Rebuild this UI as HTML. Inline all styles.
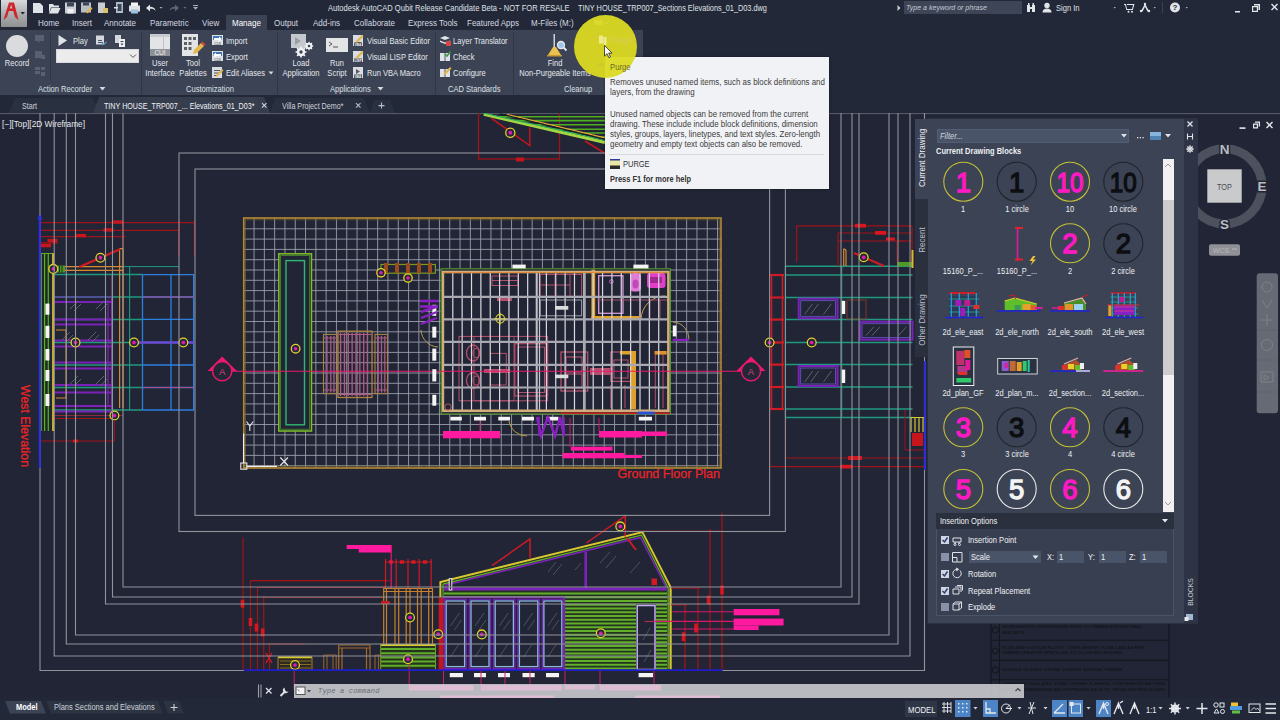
<!DOCTYPE html>
<html lang="en">
<head>
<meta charset="utf-8">
<title>Autodesk AutoCAD - TINY HOUSE_TRP007_Sections Elevations_01_D03.dwg</title>
<style>
*{box-sizing:border-box;margin:0;padding:0}
html,body{width:1280px;height:720px;overflow:hidden;background:#222535;font-family:"Liberation Sans",sans-serif;font-size:8.5px;color:#e4e7ec}
.abs{position:absolute}
#top{position:absolute;left:0;top:0;width:1280px;height:30px;background:#232838}
#ribbon{position:absolute;left:0;top:30px;width:1280px;height:67px;background:#232838}
#ribbon .pbg{position:absolute;left:0;top:0;width:643px;height:65px;background:#3b4354}
.t{position:absolute;white-space:nowrap;line-height:10px;height:10px;transform-origin:0 50%;transform:scaleX(.88)}
.sep{position:absolute;top:2px;width:1px;height:62px;background:#2f3646}
.mt{position:absolute;top:18px;white-space:nowrap;line-height:10px;color:#d5d9e0;font-size:8.7px;transform-origin:0 50%;transform:scaleX(.92)}
.rt{position:absolute;white-space:nowrap;line-height:10px;height:10px;color:#e6e9ee;font-size:8.6px;transform-origin:0 50%;transform:scaleX(.88)}
.pt{position:absolute;white-space:nowrap;line-height:10px;height:10px;color:#dde1e7;font-size:8.6px;top:53px;transform-origin:0 50%;transform:scaleX(.88)}
#ftabs{position:absolute;left:0;top:97px;width:1280px;height:16px;background:#232838}
#draw{position:absolute;left:0;top:113px;width:1280px;height:585px;background:#222535;overflow:hidden}
#status{position:absolute;left:0;top:698px;width:1280px;height:22px;background:#232838}
.c{transform-origin:50% 50%;transform:translateX(-50%) scaleX(.88);text-align:center}
.rt,.pt{margin-top:.6px}

</style>
</head>
<body>
<div id="draw">
<svg class="abs" style="left:0;top:0" width="1280" height="585" viewBox="0 113 1280 585" fill="none" shape-rendering="auto">
<path d="M0 113.6L1280 113.6" stroke="#5a5f6b" stroke-width="1" />
<rect x="478.5" y="112" width="81" height="47" stroke="#a01319" stroke-width="1.3" fill="none" />
<path d="M493.674 116.7L610 116.7" stroke="#4fae1e" stroke-width="1.6" />
<path d="M510.503 120.6L610 120.6" stroke="#4fae1e" stroke-width="1.6" />
<path d="M528.625 124.8L610 124.8" stroke="#4fae1e" stroke-width="1.6" />
<path d="M547.611 129.2L610 129.2" stroke="#4fae1e" stroke-width="1.6" />
<path d="M564.008 133L610 133" stroke="#4fae1e" stroke-width="1.6" />
<path d="M581.268 137L610 137" stroke="#4fae1e" stroke-width="1.6" />
<path d="M483.75 114.4L605 142.5" stroke="#a7d642" stroke-width="3" fill="none" />
<path d="M483.75 113.2L605 140.2" stroke="#2fae5a" stroke-width="1.2" fill="none" />
<path d="M507 114.3L605 137.8" stroke="#e8a33a" stroke-width="1.2" fill="none" />
<path d="M500 113.8L605 139.4" stroke="#161a22" stroke-width="1.2" fill="none" />
<path d="M491.5 118.3L529.8 145.6V127.6" stroke="#c4161c" stroke-width="1.5" fill="none" />
<path d="M585 141L606 154" stroke="#c4161c" stroke-width="1.5" fill="none" />
<rect x="516" y="157.5" width="8" height="4" fill="#c4161c"/>
<circle cx="510.3" cy="132.8" r="4.6" fill="#252a36" stroke="#e3d22e" stroke-width="1.3"/><circle cx="510.3" cy="132.8" r="1.932" fill="#e21bb0"/>
<path d="M254.05 218V468M264.35 218V468M274.65 218V468M284.95 218V468M295.25 218V468M305.55 218V468M315.85 218V468M326.15 218V468M336.45 218V468M346.75 218V468M357.05 218V468M367.35 218V468M377.65 218V468M387.95 218V468M398.25 218V468M408.55 218V468M418.85 218V468M429.15 218V468M439.45 218V468M449.75 218V468M460.05 218V468M470.35 218V468M480.65 218V468M490.95 218V468M501.25 218V468M511.55 218V468M521.85 218V468M532.15 218V468M542.45 218V468M552.75 218V468M563.05 218V468M573.35 218V468M583.65 218V468M593.95 218V468M604.25 218V468M614.55 218V468M624.85 218V468M635.15 218V468M645.45 218V468M655.75 218V468M666.05 218V468M676.35 218V468M686.65 218V468M696.95 218V468M707.25 218V468M717.55 218V468M243.75 228.80H721M243.75 239.10H721M243.75 249.40H721M243.75 259.70H721M243.75 270.00H721M243.75 280.30H721M243.75 290.60H721M243.75 300.90H721M243.75 311.20H721M243.75 321.50H721M243.75 331.80H721M243.75 342.10H721M243.75 352.40H721M243.75 362.70H721M243.75 373.00H721M243.75 383.30H721M243.75 393.60H721M243.75 403.90H721M243.75 414.20H721M243.75 424.50H721M243.75 434.80H721M243.75 445.10H721M243.75 455.40H721M243.75 465.70H721" stroke="#999eaa" stroke-width="0.9" fill="none" />
<rect x="243.75" y="218" width="477.25" height="250" stroke="#b48a32" stroke-width="1.6" fill="none" />
<rect x="245.5" y="219.8" width="473.7" height="246.4" stroke="#6d5c2c" stroke-width="0.8" fill="none" />
<rect x="278.8" y="253.8" width="32.7" height="177.2" stroke="#7fbf2a" stroke-width="1.5" fill="#222535" />
<rect x="280.6" y="255.6" width="29.1" height="173.6" stroke="#4c8f2a" stroke-width="0.8" fill="none" />
<rect x="286" y="260.6" width="18.5" height="164.2" stroke="#2fb873" stroke-width="1.4" fill="none" />
<circle cx="295.6" cy="348.7" r="4.3" fill="#252a36" stroke="#e3d22e" stroke-width="1.3"/><circle cx="295.6" cy="348.7" r="1.806" fill="#e21bb0"/>
<rect x="381" y="264.5" width="54.4" height="8.7" stroke="#7d9a1e" stroke-width="1.2" fill="#222535" />
<rect x="384" y="263" width="4" height="10" fill="#9a4a1c"/>
<rect x="395" y="263" width="4" height="10" fill="#9a4a1c"/>
<rect x="406" y="263" width="4" height="10" fill="#9a4a1c"/>
<rect x="417" y="263" width="4" height="10" fill="#9a4a1c"/>
<rect x="428" y="263" width="4" height="10" fill="#9a4a1c"/>
<circle cx="381" cy="272.8" r="4.2" fill="#252a36" stroke="#e3d22e" stroke-width="1.3"/><circle cx="381" cy="272.8" r="1.764" fill="#e21bb0"/>
<circle cx="408" cy="278" r="4.2" fill="#252a36" stroke="#e3d22e" stroke-width="1.3"/><circle cx="408" cy="278" r="1.764" fill="#e21bb0"/>
<rect x="323.5" y="334.4" width="13.5" height="59.3" stroke="#a88248" stroke-width="1.1" fill="none" />
<rect x="375" y="334.4" width="12.5" height="59.3" stroke="#a88248" stroke-width="1.1" fill="none" />
<rect x="338" y="331.2" width="34" height="66.3" stroke="#b08040" stroke-width="1.3" fill="none" />
<path d="M327 336V392.5M330.8 336V392.5M334 336V392.5M378.2 336V392.5M381.5 336V392.5M384.8 336V392.5" stroke="#a85a84" stroke-width="1.3" fill="none" />
<path d="M324 338H337M324 390H337M375 338H387.5M375 390H387.5" stroke="#a85a84" stroke-width="1.2" fill="none" />
<path d="M340.6 333V396M344.45 333V396M348.3 333V396M352.15 333V396M356 333V396M359.85 333V396M363.7 333V396M367.55 333V396" stroke="#b05a86" stroke-width="1.3" fill="none" />
<path d="M339 334.500H371M339 394.500H371" stroke="#b05a86" stroke-width="1.2" fill="none" />
<rect x="440.7" y="268.4" width="229.9" height="145.8" fill="#222535"/>
<rect x="459" y="336.4" width="88.6" height="64.4" stroke="#b4506e" stroke-width="1" fill="none" />
<rect x="514.8" y="343.7" width="32.8" height="52.3" stroke="#b4506e" stroke-width="1.2" fill="none" />
<rect x="518" y="347" width="26.5" height="45.5" stroke="#b4506e" stroke-width="1" fill="none" />
<rect x="490.5" y="353.4" width="15.8" height="31.6" stroke="#b4506e" stroke-width="1" fill="none" />
<rect x="474" y="336.4" width="40" height="64.4" stroke="#b4506e" stroke-width="0.8" fill="none" />
<ellipse cx="473" cy="353" rx="6.5" ry="8" stroke="#b4506e" stroke-width="1.3" fill="none"/><ellipse cx="476" cy="353" rx="3" ry="4.5" stroke="#b4506e" stroke-width="1" fill="none"/>
<ellipse cx="473" cy="380.5" rx="6.5" ry="8" stroke="#b4506e" stroke-width="1.3" fill="none"/><ellipse cx="476" cy="380.5" rx="3" ry="4.5" stroke="#b4506e" stroke-width="1" fill="none"/>
<rect x="540.3" y="274.4" width="41.3" height="21.9" stroke="#b4506e" stroke-width="1" fill="none" />
<path d="M540.3 285L570 285" stroke="#b4506e" stroke-width="1" />
<path d="M555 274.4L555 296.3" stroke="#b4506e" stroke-width="1" />
<path d="M570 274.4L570 296.3" stroke="#b4506e" stroke-width="1" />
<rect x="540.3" y="300" width="41.3" height="15.8" stroke="#9aa0aa" stroke-width="1" fill="none" />
<rect x="492" y="276" width="26" height="9.5" stroke="#b4506e" stroke-width="1" fill="none" />
<path d="M492 280.5L518 280.5" stroke="#b4506e" stroke-width="1" />
<rect x="497" y="297" width="15" height="4" fill="#b4506e"/>
<rect x="561" y="352" width="26.7" height="39" stroke="#b4506e" stroke-width="1.3" fill="none" />
<rect x="566" y="357" width="16" height="15" stroke="#b4506e" stroke-width="1.2" fill="none" />
<rect x="566" y="374" width="16" height="14" stroke="#b4506e" stroke-width="1.2" fill="none" />
<rect x="610.8" y="352" width="20.7" height="29.4" stroke="#b4506e" stroke-width="1.2" fill="none" />
<rect x="614" y="360" width="14" height="18" stroke="#b4506e" stroke-width="1" fill="none" />
<rect x="590" y="368" width="22" height="7" fill="#b4506e"/>
<rect x="484" y="369" width="26" height="4" fill="#b4506e"/>
<path d="M655.3 354.6V408M663 354.6V408M610.8 385V408M625 385V408" stroke="#b4506e" stroke-width="1" fill="none" />
<rect x="591.4" y="269.6" width="3.8" height="50" fill="#e0a12a"/>
<rect x="591.4" y="316" width="47.6" height="3.6" fill="#e0a12a"/>
<rect x="598.7" y="275.7" width="24.3" height="37.6" stroke="#d79ad6" stroke-width="1.3" fill="none" />
<circle cx="611.4" cy="281.5" r="1.8" stroke="#d060d0" stroke-width="1" fill="none"/>
<rect x="630" y="273" width="11" height="18.500" rx="4" fill="#e27ad8"/><ellipse cx="635.500" cy="284" rx="3" ry="4.500" fill="#c04ab8"/>
<rect x="647" y="273" width="18.500" height="15" rx="3" fill="#e040c8"/><path d="M650 277h12v6h-12z" fill="#a02a90"/>
<path d="M641 319A24 24 0 0 1 665 296" stroke="#c9a050" stroke-width="1" fill="none" />
<path d="M597 300H668M640 296V319M650 300V319M660 300V319" stroke="#a0506a" stroke-width="1" fill="none" />
<rect x="630" y="352" width="6" height="57" fill="#e0a12a"/>
<rect x="620" y="351" width="16" height="3.5" fill="#e0a12a"/>
<rect x="654.5" y="351" width="12.2" height="3.6" fill="#e0902a"/>
<path d="M452.80 273V410M462.16 273V410M471.52 273V410M480.88 273V410M490.24 273V410M499.60 273V410M508.96 273V410M518.32 273V410M527.68 273V410M537.04 273V410M546.40 273V410M555.76 273V410M565.12 273V410M574.48 273V410M583.84 273V410M593.20 273V410M602.56 273V410M611.92 273V410M621.28 273V410M630.64 273V410M640.00 273V410M649.36 273V410M658.72 273V410" stroke="#d9d9de" stroke-width="1.2" fill="none" />
<path d="M536.3 273V410M539.5 273V410M585 273V410" stroke="#c8c8ce" stroke-width="1.2" fill="none" />
<path d="M444 296.8H668M444 319.4H668M444 341.8H668M444 364.9H668M444 387.5H668" stroke="#a9a9b2" stroke-width="2.2" fill="none" />
<rect x="442.9" y="272" width="225.5" height="138.8" stroke="#d2ae7c" stroke-width="2.6" fill="none" />
<rect x="441.1" y="268.8" width="229.3" height="145.2" stroke="#58a82a" stroke-width="1" fill="none" />
<path d="M561 413.2L670 413.2" stroke="#d0201c" stroke-width="1.6" />
<rect x="637.5" y="411.6" width="17.1" height="2.8" fill="#2a50d8"/>
<path d="M443 272.5L668 272.5" stroke="#e08a3a" stroke-width="1" />
<path d="M222 371.3L751 371.3" stroke="#e8186c" stroke-width="1.1" />
<rect x="512.4" y="264.6" width="13.3" height="3.8" fill="#f4f4f4"/>
<rect x="633.4" y="264.6" width="15.1" height="3.8" fill="#f4f4f4"/>
<rect x="555" y="306" width="13.3" height="3.7" fill="#dcdcdc"/>
<rect x="555" y="374.6" width="13.3" height="3.6" fill="#dcdcdc"/>
<rect x="450.4" y="416.8" width="11.4" height="3.7" fill="#f4f4f4"/>
<rect x="474" y="416.8" width="12" height="3.7" fill="#f4f4f4"/>
<rect x="498.3" y="416.8" width="11.7" height="3.7" fill="#f4f4f4"/>
<rect x="522" y="416.8" width="12" height="3.7" fill="#f4f4f4"/>
<rect x="546.4" y="416.8" width="12.1" height="3.7" fill="#f4f4f4"/>
<rect x="638.8" y="416.8" width="13.2" height="3.7" fill="#f4f4f4"/>
<rect x="432.3" y="304.8" width="4" height="11" fill="#f4f4f4"/>
<rect x="432.3" y="326.7" width="4" height="10.9" fill="#f4f4f4"/>
<rect x="432.3" y="348.6" width="4" height="12.1" fill="#f4f4f4"/>
<rect x="432.3" y="369.2" width="4" height="12.2" fill="#f4f4f4"/>
<rect x="432.3" y="394.8" width="4" height="10.9" fill="#f4f4f4"/>
<rect x="672.8" y="325.5" width="3.6" height="10.9" fill="#f4f4f4"/>
<path d="M420 301H438M420 306.5H438M421 312L437 306.5M421 318L437 312M421 324L437 318" stroke="#8a1fc4" stroke-width="2.4" fill="none" />
<path d="M537 417L541 436L548 417L555 436L560 417L564 436" stroke="#8a1fc4" stroke-width="2.4" fill="none" />
<path d="M539 417V436M564 417V436" stroke="#8a1fc4" stroke-width="1.6" fill="none" />
<path d="M421 330A18 18 0 0 0 438 347" stroke="#b59a5a" stroke-width="1" fill="none" />
<path d="M509 421A18 18 0 0 0 527 436" stroke="#b5a030" stroke-width="1" fill="none" />
<path d="M673 322A17 17 0 0 1 689 339" stroke="#b59a5a" stroke-width="1" fill="none" />
<rect x="672.8" y="338.8" width="16.2" height="2.2" fill="#8a1fc4"/>
<circle cx="500.200" cy="318.700" r="4.300" stroke="#d8cf40" stroke-width="1.100" fill="none"/><path d="M494 318.700h12.400M500.200 312.500v12.400" stroke="#d8cf40" stroke-width=".8"/>
<circle cx="448" cy="407" r="3.200" stroke="#b05a5a" stroke-width="1" fill="none"/>
<rect x="443" y="431" width="57" height="7.3" fill="#ff1aa0"/>
<rect x="599" y="431" width="43" height="6.5" fill="#ff1aa0"/>
<rect x="642" y="431.5" width="25" height="4.5" fill="#ff1aa0"/>
<rect x="570.8" y="446.7" width="41.7" height="3.9" fill="#ff1aa0"/>
<rect x="562.5" y="453" width="62.5" height="5.3" fill="#ff1aa0"/>
<rect x="625" y="455" width="17" height="3" fill="#ff1aa0"/>
<path d="M570 418V447M599 418V431M480 421V431" stroke="#d8186c" stroke-width="1" fill="none" />
<path d="M207.6 371L222.2 356.500L236.79999999999998 371Z" fill="#ef1a70"/><circle cx="222.2" cy="371.200" r="9.600" fill="#232735" stroke="#e8186c" stroke-width="1.500"/><text x="222.2" y="374.800" font-size="9.500" text-anchor="middle" fill="#d8407c" font-family="Liberation Sans, sans-serif">A</text>
<path d="M736.4 371L751 356.500L765.6 371Z" fill="#ef1a70"/><circle cx="751" cy="371.200" r="9.600" fill="#232735" stroke="#e8186c" stroke-width="1.500"/><text x="751" y="374.800" font-size="9.500" text-anchor="middle" fill="#d8407c" font-family="Liberation Sans, sans-serif">A</text>
<path d="M243.6 463V433.4M247 466.4H277" stroke="#f0f0f0" stroke-width="1.2" fill="none" />
<rect x="240.8" y="463" width="6" height="6.2" stroke="#e8e8e8" stroke-width="1.1" fill="none" />
<path d="M246.5 421.5L249.8 426L253.2 421.5M249.8 426V431" stroke="#e8e8e8" stroke-width="1.1" fill="none" />
<path d="M280.3 457.5L288 465.5M288 457.5L280.3 465.5" stroke="#e8e8e8" stroke-width="1.1" fill="none" />
<text x="617.500" y="478.300" font-size="13.600" fill="#ee2428" stroke="#ee2428" stroke-width=".25" font-family="Liberation Sans, sans-serif" textLength="102.500" lengthAdjust="spacingAndGlyphs">Ground Floor Plan</text>
<text transform="translate(21.200 385) rotate(90)" font-size="13.600" fill="#ee2428" stroke="#ee2428" stroke-width=".25" font-family="Liberation Sans, sans-serif" textLength="82" lengthAdjust="spacingAndGlyphs">West Elevation</text>
<path d="M40 222.6H194.5M40 230.3H179M40 236.6H125.6M40 243H58" stroke="#a01319" stroke-width="1.3" fill="none" />
<path d="M179 220V256M194.5 220V256M122.8 220V249" stroke="#a01319" stroke-width="1.3" fill="none" />
<rect x="113" y="220.4" width="10" height="3.4" fill="#c8161e"/>
<rect x="103.5" y="228.2" width="10" height="3.4" fill="#c8161e"/>
<rect x="76" y="233.9" width="10" height="3.4" fill="#c8161e"/>
<rect x="47.5" y="238.9" width="10" height="3.4" fill="#c8161e"/>
<rect x="41" y="243.9" width="10" height="3.4" fill="#c8161e"/>
<path d="M54 274.6L142.5 274.6" stroke="#1f9a80" stroke-width="1.5" />
<path d="M54 297L142.5 297" stroke="#1f9a80" stroke-width="1.5" />
<path d="M54 319.4L142.5 319.4" stroke="#1f9a80" stroke-width="1.5" />
<path d="M54 342.5L142.5 342.5" stroke="#1f9a80" stroke-width="1.5" />
<path d="M54 365L142.5 365" stroke="#1f9a80" stroke-width="1.5" />
<path d="M54 387.5L142.5 387.5" stroke="#1f9a80" stroke-width="1.5" />
<path d="M54 410L142.5 410" stroke="#1f9a80" stroke-width="1.5" />
<path d="M123 266.6L179 266.6" stroke="#1f9a80" stroke-width="1" />
<path d="M129.6 266.6V410" stroke="#1f9a80" stroke-width="1.1" fill="none" />
<path d="M142.5 274.6H194M142.5 297H194M142.5 319.4H194M142.5 342.5H194M142.5 365H194M142.5 387.5H194M142.5 410H194" stroke="#2b7fe0" stroke-width="1.4" fill="none" />
<path d="M142.5 274.6V410M171 274.6V410M193.6 274.6V410" stroke="#2b7fe0" stroke-width="1.3" fill="none" />
<path d="M142.5 297L194 297" stroke="#b04a8a" stroke-width="1.2" />
<path d="M142.5 387.5L194 387.5" stroke="#b04a8a" stroke-width="1.2" />
<path d="M131 342.5L194 342.5" stroke="#6a4ad0" stroke-width="2.4" />
<path d="M55 302L112 302" stroke="#7a22b8" stroke-width="2" />
<path d="M55 319.4L112 319.4" stroke="#7a22b8" stroke-width="2" />
<path d="M55 324.5L112 324.5" stroke="#7a22b8" stroke-width="2" />
<path d="M55 340.5L112 340.5" stroke="#7a22b8" stroke-width="2" />
<path d="M55 346.5L112 346.5" stroke="#7a22b8" stroke-width="2" />
<path d="M55 362.5L112 362.5" stroke="#7a22b8" stroke-width="2" />
<path d="M55 368.5L112 368.5" stroke="#7a22b8" stroke-width="2" />
<path d="M55 385L112 385" stroke="#7a22b8" stroke-width="2" />
<path d="M55 392.5L112 392.5" stroke="#7a22b8" stroke-width="2" />
<path d="M55 406L112 406" stroke="#7a22b8" stroke-width="2" />
<path d="M55 411.5L112 411.5" stroke="#7a22b8" stroke-width="2" />
<path d="M111.7 297V410M108 300V406" stroke="#7a22b8" stroke-width="1.3" fill="none" />
<path d="M54.7 297H112" stroke="#7a22b8" stroke-width="1.2" fill="none" />
<path d="M112 274.6L112 410" stroke="#b04a8a" stroke-width="1" />
<path d="M70 309L78 301M74 311L81 304M96 309L104 301M100 311L107 304M88 340L96 332M92 342L99 335M70 384L78 376M74 386L81 379M96 384L104 376M100 386L107 379M62 340L70 332M66 342L73 335" stroke="#5b6170" stroke-width="1" fill="none" />
<path d="M119.6 248.6V408M123 248.6V408M119.6 248.6H123" stroke="#d8892e" stroke-width="1.2" fill="none" />
<path d="M65 266.6H123M65 270.4H123" stroke="#d8892e" stroke-width="1.2" fill="none" />
<path d="M56 330H66V398H56" stroke="#d8892e" stroke-width="1" fill="none" />
<path d="M79.2 266.9L120 249.3" stroke="#d01a24" stroke-width="2.2" />
<rect x="40.5" y="253.5" width="10" height="177.5" fill="#1d2a24"/>
<path d="M41.2 253.5V431M44.6 253.5V431M48.3 253.5V431M41 253.5H54" stroke="#5fae28" stroke-width="1.2" fill="none" />
<path d="M53.2 253.5L53.2 431" stroke="#d8b82e" stroke-width="2.2" />
<rect x="57.5" y="265.5" width="7.5" height="7" fill="#4f9a24"/>
<path d="M59.5 265.5V272.5M62 265.5V272.5" stroke="#1d2a24" stroke-width="1" fill="none" />
<path d="M39.8 215.5L39.8 452" stroke="#2a2fd8" stroke-width="2" />
<path d="M38 219L39.8 214L41.6 219Z" stroke="#2a2fd8" stroke-width="1" fill="#2a2fd8" />
<rect x="45.4" y="303.6" width="4" height="11.1" fill="#f4f4f4"/>
<rect x="45.4" y="325.8" width="4" height="12.2" fill="#f4f4f4"/>
<rect x="45.4" y="349" width="4" height="11.5" fill="#f4f4f4"/>
<rect x="45.4" y="370" width="4" height="11" fill="#f4f4f4"/>
<rect x="45.4" y="394" width="4" height="12" fill="#f4f4f4"/>
<path d="M54 415.5H123" stroke="#8a2a3a" stroke-width="1" fill="none" />
<path d="M54 418.5H112" stroke="#a01319" stroke-width="1" fill="none" />
<circle cx="53.3" cy="268.9" r="4.4" fill="#252a36" stroke="#e3d22e" stroke-width="1.3"/><circle cx="53.3" cy="268.9" r="1.848" fill="#e21bb0"/>
<circle cx="100.4" cy="257.7" r="4.4" fill="#252a36" stroke="#e3d22e" stroke-width="1.3"/><circle cx="100.4" cy="257.7" r="1.848" fill="#e21bb0"/>
<circle cx="75.5" cy="342.5" r="4.4" fill="#252a36" stroke="#e3d22e" stroke-width="1.3"/><circle cx="75.5" cy="342.5" r="1.848" fill="#e21bb0"/>
<circle cx="134" cy="342.5" r="4.4" fill="#252a36" stroke="#e3d22e" stroke-width="1.3"/><circle cx="134" cy="342.5" r="1.848" fill="#e21bb0"/>
<circle cx="183.3" cy="342.5" r="4.4" fill="#252a36" stroke="#e3d22e" stroke-width="1.3"/><circle cx="183.3" cy="342.5" r="1.848" fill="#e21bb0"/>
<circle cx="114.4" cy="415.5" r="4.4" fill="#252a36" stroke="#e3d22e" stroke-width="1.3"/><circle cx="114.4" cy="415.5" r="1.848" fill="#e21bb0"/>
<path d="M40 441H114.4M114.4 420V441" stroke="#a01319" stroke-width="1.1" fill="none" />
<rect x="73" y="439.5" width="5" height="3" fill="#d8161e"/>
<path d="M785.4 266.2L912.5 266.2" stroke="#1f9a80" stroke-width="1.5" />
<path d="M785.4 275L912.5 275" stroke="#1f9a80" stroke-width="1.5" />
<path d="M785.4 297.5L912.5 297.5" stroke="#1f9a80" stroke-width="1.5" />
<path d="M785.4 319.6L912.5 319.6" stroke="#1f9a80" stroke-width="1.5" />
<path d="M785.4 342.5L912.5 342.5" stroke="#1f9a80" stroke-width="1.5" />
<path d="M785.4 364.6L912.5 364.6" stroke="#1f9a80" stroke-width="1.5" />
<path d="M785.4 387L912.5 387" stroke="#1f9a80" stroke-width="1.5" />
<path d="M785.4 409L912.5 409" stroke="#1f9a80" stroke-width="1.5" />
<path d="M785.4 417.5L912.5 417.5" stroke="#1f9a80" stroke-width="1.5" />
<path d="M785.4 266V417.5M841.7 266V417.5" stroke="#1f9a80" stroke-width="1.1" fill="none" />
<path d="M771.5 275V409M782.5 275V409" stroke="#d01a24" stroke-width="1.6" fill="none" />
<path d="M769.6 275L784 275" stroke="#d01a24" stroke-width="2.2" />
<path d="M769.6 297.5L784 297.5" stroke="#d01a24" stroke-width="2.2" />
<path d="M769.6 319.6L784 319.6" stroke="#d01a24" stroke-width="2.2" />
<path d="M769.6 342.5L784 342.5" stroke="#d01a24" stroke-width="2.2" />
<path d="M769.6 364.6L784 364.6" stroke="#d01a24" stroke-width="2.2" />
<path d="M769.6 387L784 387" stroke="#d01a24" stroke-width="2.2" />
<path d="M769.6 409L784 409" stroke="#d01a24" stroke-width="2.2" />
<rect x="798.7" y="298.7" width="38.8" height="19.6" stroke="#7a22b8" stroke-width="2" fill="none" />
<rect x="800.7" y="300.7" width="34.8" height="15.6" stroke="#6a5ad0" stroke-width="0.8" fill="none" />
<path d="M804.7 314.3L812.7 303.7M810.7 314.3L818.7 303.7M823.5 314.3L831.5 303.7" stroke="#5b6170" stroke-width="1" fill="none" />
<rect x="860" y="321.7" width="52.5" height="17.9" stroke="#7a22b8" stroke-width="2" fill="none" />
<rect x="862" y="323.7" width="48.5" height="13.9" stroke="#6a5ad0" stroke-width="0.8" fill="none" />
<path d="M866 335.6L874 326.7M872 335.6L880 326.7M898.5 335.6L906.5 326.7" stroke="#5b6170" stroke-width="1" fill="none" />
<rect x="798.7" y="366" width="38.8" height="20" stroke="#7a22b8" stroke-width="2" fill="none" />
<rect x="800.7" y="368" width="34.8" height="16" stroke="#6a5ad0" stroke-width="0.8" fill="none" />
<path d="M804.7 382L812.7 371M810.7 382L818.7 371M823.5 382L831.5 371" stroke="#5b6170" stroke-width="1" fill="none" />
<rect x="841.7" y="300.8" width="3.5" height="13.2" fill="#f4f4f4"/>
<rect x="841.7" y="369.6" width="3.5" height="13.4" fill="#f4f4f4"/>
<rect x="847" y="300" width="19" height="19" stroke="#7a3a2a" stroke-width="1" fill="none" />
<path d="M796.7 225.8H912M838 233H912M838 241H905M796.7 225.8V262M838 233V266M912 225.8V262" stroke="#a01319" stroke-width="1.2" fill="none" />
<rect x="855" y="223.8" width="11" height="3.8" fill="#d8161e"/>
<rect x="875" y="231" width="11" height="3.8" fill="#d8161e"/>
<rect x="886" y="237.5" width="9" height="3" fill="#d8161e"/>
<path d="M897 241H912M897 241V262" stroke="#a01319" stroke-width="1" fill="none" />
<path d="M843.7 248.7V266M846 250V266" stroke="#d8892e" stroke-width="1.2" fill="none" />
<path d="M843.7 248.7L846 250" stroke="#d8892e" stroke-width="1.2" />
<path d="M854 253L884 266" stroke="#d01a24" stroke-width="2" />
<rect x="897" y="262" width="15" height="4.5" fill="#4f9a24"/>
<path d="M912.5 250L912.5 268" stroke="#d8b82e" stroke-width="2" />
<path d="M785.4 458H925M769.6 466.7H925M785.4 417.5V458M769.6 409V466.7" stroke="#a01319" stroke-width="1.2" fill="none" />
<rect x="848" y="456" width="14" height="4" fill="#d8161e"/>
<rect x="840" y="464.8" width="12" height="3.7" fill="#d8161e"/>
<path d="M925 361L925 470" stroke="#2a2fd8" stroke-width="2" />
<path d="M911 417.5V432M915 417.5V432M919 417.5V432M923 417.5V432M910 417.5H924" stroke="#d8c82e" stroke-width="1.2" fill="none" />
<rect x="912" y="433" width="11" height="13" fill="#c4161c"/>
<path d="M905 410V450M905 450H925" stroke="#a01319" stroke-width="1" fill="none" />
<circle cx="769.6" cy="342.5" r="4.4" fill="#252a36" stroke="#e3d22e" stroke-width="1.3"/><circle cx="769.6" cy="342.5" r="1.848" fill="#e21bb0"/>
<circle cx="811.7" cy="342.5" r="4.4" fill="#252a36" stroke="#e3d22e" stroke-width="1.3"/><circle cx="811.7" cy="342.5" r="1.848" fill="#e21bb0"/>
<circle cx="863.7" cy="257.3" r="4.4" fill="#252a36" stroke="#e3d22e" stroke-width="1.3"/><circle cx="863.7" cy="257.3" r="1.848" fill="#e21bb0"/>
<path d="M243 537.5V670.3M250.5 580.7V670.3M257.5 587.5V670.3M263.7 596V670.3M269.5 644V670.3" stroke="#a01319" stroke-width="1.2" fill="none" />
<path d="M250.5 580.7H390M257.5 587.5H385M263.7 597.5H382.5M269.5 644H305" stroke="#a01319" stroke-width="1.2" fill="none" />
<rect x="240.7" y="599.7" width="3.6" height="8" fill="#d8161e"/>
<rect x="248.7" y="618" width="3.6" height="8" fill="#d8161e"/>
<rect x="254.7" y="623.5" width="3.6" height="8" fill="#d8161e"/>
<rect x="260.9" y="628.5" width="3.6" height="8" fill="#d8161e"/>
<path d="M266 653L272 663M272 653L266 663" stroke="#d01a24" stroke-width="1.4" fill="none" />
<rect x="278" y="657" width="34" height="13" fill="#2a2a22"/>
<path d="M280 661H311M280 664.5H311M280 668H311" stroke="#8a6a22" stroke-width="1.1" fill="none" />
<path d="M278 657.3L312 657.3" stroke="#d8c82e" stroke-width="2" />
<path d="M278 657V670M312 657V670" stroke="#b07a2a" stroke-width="1" fill="none" />
<path d="M323.7 655H336.2M323.7 655V670M336.2 655V670M327 655V670M333 655V670" stroke="#8a5a28" stroke-width="1.2" fill="none" />
<path d="M338.7 645H370M338.7 645V670M370 645V670M342 648V670M366.5 648V670M338.7 648H370" stroke="#a06a2a" stroke-width="1.2" fill="none" />
<path d="M375 655H386M375 655V670M386 655V670M378.5 655V670" stroke="#8a5a28" stroke-width="1.2" fill="none" />
<rect x="380.7" y="644.2" width="54.8" height="25.8" fill="#26331e"/>
<path d="M381 649H435M381 653.2H435M381 657.4H435M381 661.6H435M381 665.8H435" stroke="#5fae28" stroke-width="2" fill="none" />
<path d="M380.7 645L435.5 645" stroke="#d8c82e" stroke-width="2.2" />
<path d="M380.7 644V670M435.5 644V670" stroke="#7a9a2a" stroke-width="1" fill="none" />
<path d="M383.7 589V644M386.5 589V644M395 589V644M398.7 589V644M406.2 589V644M410 589V644M417.5 589V644M421.2 589V644M428.7 589V644M432.5 589V644" stroke="#c8802c" stroke-width="1.2" fill="none" />
<path d="M383 588.5H433M383 591.5H433" stroke="#c8802c" stroke-width="1.1" fill="none" />
<path d="M385.5 562H431.2M385.5 559V588M396.2 559V588M408 559V588M419.2 559V588M431.2 559V588" stroke="#d01a24" stroke-width="1.2" fill="none" />
<rect x="389" y="560.3" width="4" height="3.4" fill="#e0161e"/>
<rect x="400" y="560.3" width="4" height="3.4" fill="#e0161e"/>
<rect x="411.5" y="560.3" width="4" height="3.4" fill="#e0161e"/>
<rect x="423" y="560.3" width="4" height="3.4" fill="#e0161e"/>
<rect x="381" y="601" width="9" height="3" fill="#c8161e"/>
<rect x="346.7" y="545" width="44.5" height="4" fill="#ff1aa0"/>
<rect x="358.7" y="548.5" width="32.5" height="4" fill="#ff1aa0"/>
<path d="M391.2 545L391.2 588" stroke="#e8186c" stroke-width="1.2" />
<rect x="438.7" y="597.5" width="5" height="72.8" fill="#c4161c"/>
<rect x="443.7" y="590" width="224.3" height="80.3" fill="#243320"/>
<path d="M444 593.50H667M444 597.25H667M444 601.00H667M444 604.75H667M444 608.50H667M444 612.25H667M444 616.00H667M444 619.75H667M444 623.50H667M444 627.25H667M444 631.00H667M444 634.75H667M444 638.50H667M444 642.25H667M444 646.00H667M444 649.75H667M444 653.50H667M444 657.25H667M444 661.00H667M444 664.75H667M444 668.50H667" stroke="#62b02a" stroke-width="1.9" fill="none" />
<rect x="444" y="597" width="120.5" height="73.3" fill="#222535"/>
<rect x="444.3" y="597.3" width="120" height="72.4" stroke="#7a22b8" stroke-width="1.6" fill="none" />
<rect x="444.6" y="599.2" width="21.6" height="69.4" stroke="#7a22b8" stroke-width="1.2" fill="none" />
<rect x="446.2" y="601" width="18.4" height="65.6" stroke="#8fb8e8" stroke-width="1.3" fill="none" />
<path d="M450.4 626L459.4 613M454.4 630L461.4 620M450.4 657L458.4 645" stroke="#4b5262" stroke-width="1" fill="none" />
<rect x="469.4" y="599.2" width="21.2" height="69.4" stroke="#7a22b8" stroke-width="1.2" fill="none" />
<rect x="471" y="601" width="18" height="65.6" stroke="#8fb8e8" stroke-width="1.3" fill="none" />
<path d="M475.0 626L484.0 613M479.0 630L486.0 620M475.0 657L483.0 645" stroke="#4b5262" stroke-width="1" fill="none" />
<rect x="493.6" y="599.2" width="21.4" height="69.4" stroke="#7a22b8" stroke-width="1.2" fill="none" />
<rect x="495.2" y="601" width="18.2" height="65.6" stroke="#8fb8e8" stroke-width="1.3" fill="none" />
<path d="M499.29999999999995 626L508.29999999999995 613M503.29999999999995 630L510.29999999999995 620M499.29999999999995 657L507.29999999999995 645" stroke="#4b5262" stroke-width="1" fill="none" />
<rect x="517.8" y="599.2" width="21.6" height="69.4" stroke="#7a22b8" stroke-width="1.2" fill="none" />
<rect x="519.4" y="601" width="18.4" height="65.6" stroke="#8fb8e8" stroke-width="1.3" fill="none" />
<path d="M523.5999999999999 626L532.5999999999999 613M527.5999999999999 630L534.5999999999999 620M523.5999999999999 657L531.5999999999999 645" stroke="#4b5262" stroke-width="1" fill="none" />
<rect x="542.3" y="599.2" width="21.1" height="69.4" stroke="#7a22b8" stroke-width="1.2" fill="none" />
<rect x="543.9" y="601" width="17.9" height="65.6" stroke="#8fb8e8" stroke-width="1.3" fill="none" />
<path d="M547.8499999999999 626L556.8499999999999 613M551.8499999999999 630L558.8499999999999 620M547.8499999999999 657L555.8499999999999 645" stroke="#4b5262" stroke-width="1" fill="none" />
<rect x="636" y="604" width="20" height="66.3" fill="#222535"/>
<rect x="637.2" y="605.5" width="17.8" height="64" stroke="#c4aef4" stroke-width="1.5" fill="none" />
<path d="M643 640L650 628M644 662L651 650" stroke="#4b5262" stroke-width="1" fill="none" />
<path d="M644.7 621.4L660 621.4" stroke="#c8285a" stroke-width="1" />
<path d="M444 588.5L444 583.5L641.5 535L668 588.5Z" stroke="none" stroke-width="0" fill="#222535" />
<path d="M446 587L446 585L640.5 537.5L666 587" stroke="#7a22b8" stroke-width="1.6" fill="none" />
<path d="M444 588.9L667 588.9" stroke="#7a22b8" stroke-width="3" />
<path d="M585.7 552V588" stroke="#7a22b8" stroke-width="2.6" fill="none" />
<path d="M548 572L556 562M553 575L562 564M600 563L610 552M606 568L616 556M630 573L640 562M575 570L581 563" stroke="#4b5262" stroke-width="1" fill="none" />
<path d="M440.5 597V582.2L642.3 532.2L670.6 587.5V669.5" stroke="#d8c830" stroke-width="2.2" fill="none" />
<path d="M443 597V584L641.6 535L668.2 588V669.5" stroke="#5fae28" stroke-width="1.3" fill="none" />
<path d="M441.8 597V583.2L642 533.7L669.4 588" stroke="#30341c" stroke-width="0.7" fill="none" />
<rect x="449.2" y="578.7" width="2.6" height="11.3" fill="#222535"/>
<rect x="449.2" y="578.7" width="2.6" height="11.3" stroke="#f0e8e8" stroke-width="1" fill="none" />
<path d="M492 565.7L530 539V558" stroke="#d01a24" stroke-width="1.5" fill="none" />
<path d="M586.4 543L625.3 516V536.5" stroke="#d01a24" stroke-width="1.5" fill="none" />
<path d="M625 531.4H722.5" stroke="#d01a24" stroke-width="1.1" fill="none" />
<rect x="651.5" y="578.5" width="5.5" height="6.5" fill="#d01a24"/>
<path d="M627 538L636 550" stroke="#d01a24" stroke-width="2" fill="none" />
<path d="M722 512.5V670.3M710 529V670.3M698 588V670.3M685 605V670.3" stroke="#a01319" stroke-width="1.3" fill="none" />
<path d="M671 588.3H700M671 605H687" stroke="#a01319" stroke-width="1.1" fill="none" />
<rect x="720.2" y="585.5" width="3.6" height="9" fill="#d8161e"/>
<rect x="706.8" y="595.5" width="3.6" height="9" fill="#d8161e"/>
<rect x="694.2" y="623.5" width="3.6" height="9" fill="#d8161e"/>
<rect x="681.8" y="632.2" width="3.6" height="9" fill="#d8161e"/>
<path d="M672.5 611.7H733.6M655 621.4H733.6M672.5 629H733.6" stroke="#d8186c" stroke-width="1.1" fill="none" />
<rect x="733.6" y="609" width="45.8" height="6.3" fill="#ff1aa0"/>
<rect x="733.6" y="618.6" width="50" height="6.9" fill="#ff1aa0"/>
<rect x="733.6" y="625.5" width="25" height="4.5" fill="#ff1aa0"/>
<path d="M243.7 670.3L722.5 670.3" stroke="#1e1ecb" stroke-width="1.5" />
<rect x="449.8" y="673" width="13.1" height="4.2" fill="#f4f4f4"/>
<rect x="474" y="673" width="12" height="4.2" fill="#f4f4f4"/>
<rect x="498" y="673" width="12" height="4.2" fill="#f4f4f4"/>
<rect x="522.5" y="673" width="12.2" height="4.2" fill="#f4f4f4"/>
<rect x="546" y="673" width="13" height="4.2" fill="#f4f4f4"/>
<rect x="638.6" y="673" width="14.4" height="4.2" fill="#f4f4f4"/>
<path d="M294.2 670V690M409.2 664V690M443.5 671V690M481 671V690M505 671V690M530 671V690M565 671V690M600 671V690M654 671V690" stroke="#c8206a" stroke-width="1" fill="none" />
<rect x="409" y="685" width="64.60000000000002" height="5.5" fill="#ff3aae"/>
<rect x="481" y="685" width="80.70000000000005" height="5.5" fill="#ff3aae"/>
<rect x="565" y="685" width="30" height="4.5" fill="#ff3aae"/>
<rect x="600" y="685" width="61" height="5.5" fill="#ff3aae"/>
<rect x="440" y="695.5" width="114" height="3.5" fill="#ff3aae"/>
<rect x="635" y="695.5" width="85" height="3.5" fill="#ff3aae"/>
<circle cx="620.3" cy="526.4" r="4.4" fill="#252a36" stroke="#e3d22e" stroke-width="1.3"/><circle cx="620.3" cy="526.4" r="1.848" fill="#e21bb0"/>
<circle cx="410" cy="617.5" r="4.4" fill="#252a36" stroke="#e3d22e" stroke-width="1.3"/><circle cx="410" cy="617.5" r="1.848" fill="#e21bb0"/>
<circle cx="438.2" cy="634.2" r="4.4" fill="#252a36" stroke="#e3d22e" stroke-width="1.3"/><circle cx="438.2" cy="634.2" r="1.848" fill="#e21bb0"/>
<circle cx="481.8" cy="634.4" r="4.4" fill="#252a36" stroke="#e3d22e" stroke-width="1.3"/><circle cx="481.8" cy="634.4" r="1.848" fill="#e21bb0"/>
<circle cx="600.8" cy="633.3" r="4.4" fill="#252a36" stroke="#e3d22e" stroke-width="1.3"/><circle cx="600.8" cy="633.3" r="1.848" fill="#e21bb0"/>
<circle cx="408" cy="659.2" r="4.4" fill="#252a36" stroke="#e3d22e" stroke-width="1.3"/><circle cx="408" cy="659.2" r="1.848" fill="#e21bb0"/>
<circle cx="295" cy="665" r="4.4" fill="#252a36" stroke="#e3d22e" stroke-width="1.3"/><circle cx="295" cy="665" r="1.848" fill="#e21bb0"/>
<path d="M991 600V699.500M999.500 600V699.500M1169 600V699.500M991 640.300H1169M991 660.400H1169M991 679.700H1169M991 699.400H1169" stroke="#13161c" stroke-width="1.100"/>
<circle cx="995.300" cy="630" r="3" stroke="#13161c" stroke-width="1" fill="none"/>
<circle cx="995.300" cy="651" r="3" stroke="#13161c" stroke-width="1" fill="none"/>
<circle cx="995.300" cy="670" r="3" stroke="#13161c" stroke-width="1" fill="none"/>
<text x="1002" y="628" font-size="4.200" fill="#13161c" font-family="Liberation Sans, sans-serif" textLength="140" lengthAdjust="spacingAndGlyphs" font-weight="bold">INCREASED FIG DIXON FRAME FIXED TO TIMBER ACROSS FINAL</text>
<text x="1002" y="633.5" font-size="4.200" fill="#13161c" font-family="Liberation Sans, sans-serif" textLength="22" lengthAdjust="spacingAndGlyphs" font-weight="bold">BRACKETS</text>
<text x="1002" y="648.5" font-size="4.200" fill="#13161c" font-family="Liberation Sans, sans-serif" textLength="142" lengthAdjust="spacingAndGlyphs" font-weight="bold">FLUE AND GUSTOM FLOOR - OVER ARMOR TO BE LAID AS PER</text>
<text x="1002" y="653.5" font-size="4.200" fill="#13161c" font-family="Liberation Sans, sans-serif" textLength="120" lengthAdjust="spacingAndGlyphs" font-weight="bold">TIMBER CREATOR SPECS LED TO CLOSE BIO FLOORS</text>
<text x="1002" y="671" font-size="4.200" fill="#13161c" font-family="Liberation Sans, sans-serif" textLength="120" lengthAdjust="spacingAndGlyphs" font-weight="bold">DOUBLE GLAZED STONE JOINERY EXPOSE TIMBER</text>
<text x="1002" y="685" font-size="4.200" fill="#13161c" font-family="Liberation Sans, sans-serif" textLength="163" lengthAdjust="spacingAndGlyphs" font-weight="bold">LAMINATED INSULATED STEEL CORNER FLASHING OVER BRACED BATTENS</text>
<text x="1002" y="690.5" font-size="4.200" fill="#13161c" font-family="Liberation Sans, sans-serif" textLength="163" lengthAdjust="spacingAndGlyphs" font-weight="bold">BREATHER MEMBRANE BELOW FRAMED BACK TO CROSS BATTENS BOARD</text>
<path d="M123 113V587H841V113" stroke="#8f939c" stroke-width="1.1"/>
<path d="M112.5 113V597H852V113" stroke="#8f939c" stroke-width="1.1"/>
<path d="M105.5 113V604H859V113" stroke="#8f939c" stroke-width="1.1"/>
<path d="M75.5 113V635H889V113" stroke="#8f939c" stroke-width="1.1"/>
<path d="M66.3 113V644H898V113" stroke="#8f939c" stroke-width="1.1"/>
<path d="M54.2 113V656H910V113" stroke="#8f939c" stroke-width="1.1"/>
<path d="M40 113V670.5H924.5V113" stroke="#8f939c" stroke-width="1.1"/>
<rect x="179" y="153" width="606.4" height="378.5" stroke="#8f939c" stroke-width="1.1"/>
<rect x="195" y="169" width="574.6" height="346.4" stroke="#8f939c" stroke-width="1.1"/>
<path d="M243.7 670.3H722.5" stroke="#1e1ecb" stroke-width="1.500"/>
<path d="M39.8 215.5V468" stroke="#2a2fd8" stroke-width="2"/>
<path d="M925 361V470" stroke="#2a2fd8" stroke-width="2"/>
</svg>
<div class="t" style="left:2px;top:6px;font-size:8.6px;color:#e6e8ec;transform:scaleX(.963)">[−][Top][2D Wireframe]</div>
</div>
<div id="top">
<div class="abs" style="left:1px;top:0;width:26px;height:27px;background:linear-gradient(#d9dadb,#a9abad 55%,#8e9092)"></div>
<svg class="abs" style="left:0;top:0" width="30" height="28" viewBox="0 0 30 28"><path d="M3.5 20 L9 2.5 L14 2.5 L18.5 20 L15 17 L13.2 11 L8.8 11 L7 17 Z M9.8 8.5 L12.4 8.5 L11.2 4.5 Z" fill="#d2232a" fill-rule="evenodd"/><path d="M20.5 12 L25 12 L22.7 14.5 Z" fill="#1e222c"/></svg>
<svg class="abs" style="left:30px;top:0" width="180" height="16" viewBox="30 0 180 16">
<g fill="#dfe2e6">
<path d="M33 3h7l3 3v7h-10z"/>
<path d="M49 4h4l1 1.500h5v2h-8l-2 5.500z M51.500 8h9l-2.500 5.500h-9z"/>
<rect x="65" y="2.500" width="11" height="11" fill="#c9cdd3"/><rect x="67" y="2.500" width="7" height="4" fill="#3d4556"/><rect x="67.500" y="9" width="6" height="4.500" fill="#f0f0f0"/>
<rect x="81" y="2.500" width="10" height="10" fill="#b9bdc4"/><rect x="83" y="2.500" width="6" height="3" fill="#3d4556"/><path d="M86 12l5-5 1.500 1.500-5 5z" fill="#e0b64a"/>
<rect x="98" y="2.500" width="7" height="10.500" fill="#c9cdd3"/><rect x="103" y="8" width="5" height="5" fill="#d9c36a"/>
<rect x="116" y="2" width="7" height="11" fill="#aebccb"/><rect x="117.500" y="4" width="4" height="7" fill="#3d4556"/><path d="M114 7h4v1.500h-4z" fill="#dfe2e6"/>
<rect x="129" y="5.500" width="11" height="6" fill="#dfe2e6"/><rect x="131" y="2.500" width="7" height="3.500" fill="#f4f4f4"/><rect x="131" y="9.500" width="7" height="4" fill="#9fc3de"/>
<path d="M146 8l4-3.500v2.300c3 0 5 1 5.500 4-1.500-1.800-3-2-5.500-2v2.700z"/>
<path d="M159.500 7h3l-1.500 1.800z" fill="#aab0ba"/>
<path d="M179 8l-4-3.500v2.300c-3 0-5 1-5.500 4 1.500-1.800 3-2 5.500-2v2.700z" fill="#5d6573"/>
<path d="M183.500 7h3l-1.500 1.800z" fill="#6d7583"/>
<path d="M193 5h5v1h-5z M193 7h5l-2.500 2.800z" fill="#aab0ba"/>
</g></svg>
<div class="t" style="left:328px;top:3px;font-size:8.6px;color:#dfe2e7">Autodesk AutoCAD Qubit Release Candidate Beta - NOT FOR RESALE</div>
<div class="t" style="left:578px;top:3px;font-size:8.6px;color:#dfe2e7;transform:scaleX(.853)">TINY HOUSE_TRP007_Sections Elevations_01_D03.dwg</div>
<svg class="abs" style="left:896px;top:4px" width="6" height="8" viewBox="0 0 6 8"><path d="M1.500 1l3 3-3 3z" fill="#c9cdd4"/></svg>
<div class="abs" style="left:904px;top:1px;width:118px;height:13px;background:#3d4557"></div>
<div class="t" style="left:906px;top:3px;font-size:8px;font-style:italic;color:#c5cad3">Type a keyword or phrase</div>
<svg class="abs" style="left:1024px;top:1px" width="256" height="14" viewBox="1024 1 256 14">
<g fill="#e1e4e9">
<path d="M1027 5h3v7h-3z M1032 5h3v7h-3z M1028 3h1.500v3h-1.500z M1032.500 3h1.500v3h-1.500z M1030 7h2v2h-2z"/>
<circle cx="1047" cy="5.500" r="2.700"/><path d="M1042.500 12.500c0-3 2-4 4.500-4s4.500 1 4.500 4z"/>
<path d="M1113.500 7h2.400l-1.200 1.500z" fill="#aab0ba"/>
<path d="M1124 4h2l1 5h5l1-4h-6v-1h7.500l-1.700 6h-6.500l-1.200-5h-1.100z"/><circle cx="1128.500" cy="11.800" r="1"/><circle cx="1132" cy="11.800" r="1"/>
<path d="M1145 3.500l4.200 8h-1.800l-2.400-4.800-2.400 4.800h-1.800z"/><circle cx="1145" cy="4" r="1.200"/><circle cx="1141" cy="11" r="1.200"/><circle cx="1149" cy="11" r="1.200"/>
<path d="M1153.500 7h2.400l-1.200 1.500z" fill="#aab0ba"/>
<rect x="1162" y="2" width="1" height="11" fill="#3b4252"/>
<circle cx="1175" cy="7.500" r="5"/>
<path d="M1185.500 7h2.400l-1.200 1.500z" fill="#aab0ba"/>
<rect x="1235" y="11" width="5" height="1.500"/>
<path d="M1252 6h6v6h-6z M1253.200 7.200v3.600h3.600v-3.600z M1254 4h6v6h-1.500v-4.500h-4.500z" fill-rule="evenodd"/>
<path d="M1271 4.500l1-1 2.500 2.500 2.500-2.500 1 1-2.500 2.500 2.500 2.500-1 1-2.500-2.500-2.500 2.500-1-1 2.500-2.500z"/>
</g>
<text x="1175" y="10.300" font-size="8" font-weight="bold" text-anchor="middle" fill="#232838" font-family="Liberation Sans, sans-serif">?</text>
</svg>
<div class="t" style="left:1056px;top:3px;font-size:8.6px;color:#dfe2e7">Sign In</div>
<div class="abs" style="left:226px;top:15px;width:41px;height:15px;background:#3b4354"></div>
<div class="mt" style="left:38px">Home</div>
<div class="mt" style="left:72px">Insert</div>
<div class="mt" style="left:104px">Annotate</div>
<div class="mt" style="left:150px">Parametric</div>
<div class="mt" style="left:202px">View</div>
<div class="mt" style="left:232px;color:#fff">Manage</div>
<div class="mt" style="left:274px">Output</div>
<div class="mt" style="left:313px">Add-ins</div>
<div class="mt" style="left:354px">Collaborate</div>
<div class="mt" style="left:408px">Express Tools</div>
<div class="mt" style="left:467px">Featured Apps</div>
<div class="mt" style="left:531px">M-Files (M:)</div>
<div class="abs" style="left:594px;top:20px;width:9px;height:5px;background:#d7dbe2;border-radius:1px"></div>
<div class="abs" style="left:606px;top:22px;width:2px;height:2px;background:#aeb3bc"></div>

</div>
<div id="ribbon"><div class="pbg"></div>
<div class="sep" style="left:50px;height:48px"></div>
<div class="sep" style="left:141px"></div>
<div class="sep" style="left:277px"></div>
<div class="sep" style="left:435px"></div>
<div class="sep" style="left:513px"></div>
<!-- Action Recorder -->
<div class="abs" style="left:6px;top:5px;width:22px;height:22px;border-radius:50%;background:#dadbdd"></div>
<div class="rt c" style="left:17px;top:27.200px">Record</div>
<svg class="abs" style="left:33px;top:4px" width="14" height="48" viewBox="0 0 14 48"><g fill="#586173"><path d="M2 1h9v6h-4l-2 2v-2h-3z"/><path d="M2 17h7v7h-7z M8 21h4v4h-4z"/><path d="M2 33h5v3h-5z M8 33h4v3h-4z M2 37h5v3h-5z M8 38h4v4h-4z"/></g></svg>
<svg class="abs" style="left:57px;top:4px" width="12" height="13" viewBox="0 0 12 13"><path d="M1.500 1l8.500 5.500-8.500 5.500z" fill="#dfe2e6"/></svg>
<div class="rt" style="left:73px;top:5px">Play</div>
<svg class="abs" style="left:95px;top:4px" width="34" height="14" viewBox="0 0 34 14"><rect x="1" y="1.500" width="8" height="9" fill="#d4d8dd"/><path d="M3 6h4v1h-4z M3 8h5v1h-5z" fill="#4b5567"/><path d="M6 9l3 2 3-3-1-.5-2 2-2-1z" fill="#6ea3cf"/><rect x="20" y="1" width="6" height="8" fill="#d4d8dd"/><rect x="24" y="5" width="6" height="8" fill="#eef0f2"/><path d="M25.500 7h3v1h-3z M25.500 9.500h3l-1.500 2z" fill="#3b4354"/></svg>
<div class="abs" style="left:56px;top:19px;width:83px;height:14px;background:#ececed;border:1px solid #d6d8db"></div>
<svg class="abs" style="left:129px;top:23px" width="8" height="6" viewBox="0 0 8 6"><path d="M1 1.500l3 3 3-3" stroke="#555" stroke-width="1" fill="none"/></svg>
<div class="pt" style="left:38px">Action Recorder</div>
<svg class="abs" style="left:99px;top:56px" width="7" height="5" viewBox="0 0 7 5"><path d="M.5 1h6l-3 3.500z" fill="#d5d9e0"/></svg>
<!-- Customization -->
<svg class="abs" style="left:149px;top:3px" width="22" height="24" viewBox="0 0 22 24"><rect x="1" y="1" width="20" height="15" fill="#e3e4e6"/><rect x="1" y="1" width="20" height="3" fill="#c9cbcf"/><rect x="14" y="4" width="1" height="12" fill="#bfc2c7"/><rect x="1" y="16" width="20" height="7" fill="#8d9096"/><text x="11" y="22" font-size="6.500" text-anchor="middle" fill="#f0f0f0" font-family="Liberation Sans, sans-serif">CUI</text></svg>
<div class="rt c" style="left:160px;top:27.200px">User</div>
<div class="rt c" style="left:160px;top:37.200px">Interface</div>
<svg class="abs" style="left:181px;top:3px" width="26" height="24" viewBox="0 0 26 24"><rect x="1" y="1" width="16" height="22" fill="#e3e4e6"/><g fill="#5b6068"><rect x="3" y="4" width="3" height="3"/><rect x="7.500" y="4" width="3" height="3"/><rect x="12" y="4" width="3" height="3"/><rect x="3" y="9" width="3" height="3"/><rect x="7.500" y="9" width="3" height="3"/><rect x="3" y="14" width="3" height="3"/><rect x="7.500" y="14" width="3" height="3"/></g><path d="M13 17l7-7 3 3-7 7-4 1z" fill="#e3b94c"/><path d="M20 10l1.500-1.500 3 3-1.500 1.500z" fill="#d8453e"/></svg>
<div class="rt c" style="left:193px;top:27.200px">Tool</div>
<div class="rt c" style="left:193px;top:37.200px">Palettes</div>
<svg class="abs" style="left:211px;top:4px" width="13" height="46" viewBox="0 0 13 46"><g><rect x="1" y="1" width="11" height="10" fill="#dfe2e6"/><rect x="2" y="2" width="9" height="4" fill="#3f78b5"/><path d="M3 4h5v-1.500l3 2.500-3 2.500v-1.500h-5z" fill="#fff"/><text x="6.500" y="10.500" font-size="3.800" text-anchor="middle" fill="#333" font-family="Liberation Sans, sans-serif">CUI</text>
<rect x="1" y="17" width="11" height="10" fill="#dfe2e6"/><rect x="2" y="18" width="9" height="4" fill="#3f78b5"/><path d="M10 20h-5v-1.500l-3 2.500 3 2.500v-1.500h5z" fill="#fff"/><text x="6.500" y="26.500" font-size="3.800" text-anchor="middle" fill="#333" font-family="Liberation Sans, sans-serif">CUI</text>
<rect x="1" y="33" width="10" height="11" fill="#d9dce1"/><path d="M3 36h6v1h-6z M3 38.500h6v1h-6z M3 41h4v1h-4z" fill="#555b66"/><path d="M5 41l6-6 1.500 1.500-6 6-2 .5z" fill="#e0b64a"/></g></svg>
<div class="rt" style="left:226px;top:5px">Import</div>
<div class="rt" style="left:226px;top:21px">Export</div>
<div class="rt" style="left:226px;top:37px">Edit Aliases</div>
<svg class="abs" style="left:268px;top:41px" width="6" height="4" viewBox="0 0 6 4"><path d="M.5.500h5l-2.500 3z" fill="#d5d9e0"/></svg>
<div class="pt c" style="left:210px">Customization</div>
<!-- Applications -->
<svg class="abs" style="left:289px;top:3px" width="26" height="26" viewBox="0 0 26 26"><rect x="2" y="1" width="15" height="14" fill="#c5c8cd"/><path d="M6 4l6 4-6 4z" fill="#9a9ea6"/><g fill="#f2f3f4"><circle cx="12" cy="19" r="4.200"/><circle cx="20" cy="13" r="3.200"/></g><g fill="#3b4354"><circle cx="12" cy="19" r="1.700"/><circle cx="20" cy="13" r="1.300"/></g><g stroke="#f2f3f4" stroke-width="1.600"><path d="M12 13.500v11 M6.500 19h11 M8.100 15.100l7.800 7.800 M15.900 15.100l-7.800 7.800"/><path d="M20 8.800v8.400 M15.800 13h8.400 M17 10l6 6 M23 10l-6 6" stroke-width="1.300"/></g><g fill="#3b4354"><circle cx="12" cy="19" r="1.700"/><circle cx="20" cy="13" r="1.300"/></g></svg>
<div class="rt c" style="left:301px;top:27.200px">Load</div>
<div class="rt c" style="left:301px;top:37.200px">Application</div>
<svg class="abs" style="left:325px;top:6px" width="24" height="18" viewBox="0 0 24 18"><rect x="1" y="2" width="22" height="14" fill="#e3e4e6"/><path d="M4 6l3 2-3 2" stroke="#555" stroke-width="1" fill="none"/><path d="M8 11h5" stroke="#555" stroke-width="1"/></svg>
<div class="rt c" style="left:337px;top:27.200px">Run</div>
<div class="rt c" style="left:337px;top:37.200px">Script</div>
<svg class="abs" style="left:352px;top:4px" width="13" height="46" viewBox="0 0 13 46"><g><rect x="1" y="1" width="10" height="11" fill="#d9dce1"/><path d="M3 8h6v1h-6z" fill="#555b66"/><rect x="2" y="8.500" width="8" height="3.500" fill="#4d535e"/><text x="6" y="11.600" font-size="3.200" text-anchor="middle" fill="#f0f0f0" font-family="Liberation Sans, sans-serif" font-weight="bold">VBA</text><path d="M4 7l6-6 1.500 1.500-6 6-2 .5z" fill="#e0b64a"/>
<rect x="1" y="17" width="10" height="11" fill="#d9dce1"/><rect x="2" y="24.500" width="8" height="3.500" fill="#4d535e"/><text x="6" y="27.600" font-size="3.200" text-anchor="middle" fill="#f0f0f0" font-family="Liberation Sans, sans-serif" font-weight="bold">LISP</text><path d="M4 23l6-6 1.500 1.500-6 6-2 .5z" fill="#e0b64a"/>
<rect x="1" y="33" width="10" height="11" fill="#d9dce1"/><path d="M4 35l4 2.500-4 2.500z" fill="#555b66"/><rect x="2" y="40.500" width="8" height="3.500" fill="#4d535e"/><text x="6" y="43.600" font-size="3.200" text-anchor="middle" fill="#f0f0f0" font-family="Liberation Sans, sans-serif" font-weight="bold">VBA</text></g></svg>
<div class="rt" style="left:367px;top:5px">Visual Basic Editor</div>
<div class="rt" style="left:367px;top:21px">Visual LISP Editor</div>
<div class="rt" style="left:367px;top:37px">Run VBA Macro</div>
<div class="pt" style="left:330px">Applications</div>
<svg class="abs" style="left:377px;top:56px" width="7" height="5" viewBox="0 0 7 5"><path d="M.5 1h6l-3 3.500z" fill="#d5d9e0"/></svg>
<!-- CAD Standards -->
<svg class="abs" style="left:439px;top:4px" width="13" height="46" viewBox="0 0 13 46"><g><path d="M1 4l5-2 5 2-5 2z M1 6.500l5 2 5-2v1.500l-5 2-5-2z" fill="#e1e4e8"/><rect x="7" y="7" width="5" height="5" fill="#d8453e"/>
<rect x="1" y="19" width="10" height="8" fill="#dfe2e6"/><path d="M6 19v8" stroke="#555b66"/><path d="M6 20l2 2 3.500-4.500" stroke="#3d9b4a" stroke-width="1.600" fill="none"/>
<rect x="1" y="35" width="10" height="8" fill="#dfe2e6"/><path d="M6 35v8" stroke="#555b66"/><path d="M5 39l6-6 1.500 1.500-6 6-2 .5z" fill="#e0b64a"/></g></svg>
<div class="rt" style="left:453px;top:5px">Layer Translator</div>
<div class="rt" style="left:453px;top:21px">Check</div>
<div class="rt" style="left:453px;top:37px">Configure</div>
<div class="pt" style="left:448px">CAD Standards</div>
<!-- Cleanup -->
<svg class="abs" style="left:542px;top:3px" width="26" height="26" viewBox="0 0 26 26"><path d="M11.500 1h1.500v13h-1.500z" fill="#cfd2d7"/><path d="M6 22l5-8h3l5 8z" fill="#e8c14e"/><path d="M5 22h15v1.500h-15z" fill="#c79a2e"/><circle cx="19" cy="12" r="3.500" fill="#9cc7ea" stroke="#e8eaed" stroke-width="1.300"/><path d="M21.500 14.500l3 3" stroke="#e8eaed" stroke-width="1.800"/></svg>
<div class="rt c" style="left:555px;top:27.200px">Find</div>
<div class="rt c" style="left:555px;top:37.200px">Non-Purgeable Items</div>
<div class="pt" style="left:564px">Cleanup</div>

</div>
<div id="ftabs">
<svg class="abs" style="left:0;top:0" width="400" height="16" viewBox="0 0 400 16">
<path d="M9 16L15 1h78l6 15z" fill="#293040"/>
<path d="M93 16L99 0h165l6 16z" fill="#363d4d"/>
<path d="M270 16l5-15h89l6 15z" fill="#293040"/>
<path d="M370 16l4-13h16l5 13z" fill="#293040"/>
<g stroke="#b9bec8" stroke-width="1.100" fill="none" transform="translate(0 .6)"><path d="M262 5.500l4.500 4.500 M266.500 5.500l-4.500 4.500" stroke="#cfd3da"/><path d="M356 5.500l4.500 4.500 M360.500 5.500l-4.500 4.500"/><path d="M381.500 5v6 M378.500 8h6"/></g>
</svg>
<div class="t" style="left:22px;top:4.700px;font-size:8.150px;color:#cfd3da">Start</div>
<div class="t" style="left:104px;top:4.700px;font-size:8.150px;color:#f0f2f5">TINY HOUSE_TRP007_... Elevations_01_D03*</div>
<div class="t" style="left:282px;top:4.700px;font-size:8.150px;color:#cfd3da">Villa Project Demo*</div>

</div>
<svg class="abs" style="left:1180px;top:115px" width="100" height="310" viewBox="1180 115 100 310">
<circle cx="1224.500" cy="186.300" r="37.500" stroke="#4c515d" stroke-width="9" fill="none"/>
<rect x="1207.300" y="169.300" width="34.400" height="33.400" fill="#c9cacc"/>
<rect x="1209" y="244.300" width="31" height="11.400" rx="2" fill="#8f9196"/>
<rect x="1256.700" y="273.300" width="21.300" height="140" rx="3" fill="#666a74"/>
<g stroke="#7d8189" stroke-width="1" fill="none"><circle cx="1267" cy="287" r="5"/><path d="M1262 300l5 8 5-8M1261 320h12M1267 314v12"/><circle cx="1267" cy="345" r="5.500"/><path d="M1261 372h12v10h-12zM1264 375l5 2.500-5 2.500z"/><path d="M1258 330h19M1258 360h19M1258 392h19" stroke="#5e626a"/></g>
<g fill="#e4e7ec"><rect x="1239.500" y="127.300" width="6" height="1.600"/><path d="M1253 123.500h5v5h-5zM1254.200 124.700v2.600h2.600v-2.600z M1255 121.500h5v5h-1.300v-3.700h-3.700z" fill-rule="evenodd"/><path d="M1266 122.500l1-1 2.500 2.500 2.500-2.500 1 1-2.500 2.500 2.500 2.500-1 1-2.500-2.500-2.500 2.500-1-1 2.500-2.500z"/></g>
<g font-family="Liberation Sans, sans-serif" font-weight="bold" text-anchor="middle">
<text x="1224.500" y="153.500" font-size="13.500" fill="#b9bcc2" stroke="#222535" stroke-width="3" paint-order="stroke">N</text>
<text x="1224.500" y="228.700" font-size="13.500" fill="#b9bcc2" stroke="#222535" stroke-width="3" paint-order="stroke">S</text>
<text x="1262" y="191.200" font-size="13.500" fill="#b9bcc2" stroke="#222535" stroke-width="3" paint-order="stroke">E</text>
<text x="1224.500" y="189.500" font-size="8.500" font-weight="normal" fill="#4a4d54" textLength="15" lengthAdjust="spacingAndGlyphs">TOP</text>
<text x="1221" y="253" font-size="7" font-weight="normal" fill="#b5b7bc">WCS</text>
</g>
<path d="M1232 249h5" stroke="#b5b7bc" stroke-width="1"/>
</svg>

<div class="abs" style="left:927px;top:118px;width:271px;height:506px;background:#2a303d"></div>
<div class="abs" style="left:928px;top:119px;width:256px;height:504px;background:#3b4354"></div>
<div class="abs" style="left:915px;top:119px;width:14px;height:80px;background:#3b4354"></div>
<div class="abs" style="left:915px;top:199px;width:13px;height:158px;background:#2a303d"></div>
<div class="abs" style="left:1184px;top:119px;width:14px;height:504px;background:#2e3445"></div>
<div class="abs" style="left:921.5px;top:158px;width:0;height:0"><div style="position:absolute;white-space:nowrap;font-size:8.9px;line-height:10px;color:#eef0f3;transform:translate(-50%,-50%) rotate(-90deg) scaleX(.9)">Current Drawing</div></div>
<div class="abs" style="left:921.5px;top:240px;width:0;height:0"><div style="position:absolute;white-space:nowrap;font-size:8.9px;line-height:10px;color:#b9bec8;transform:translate(-50%,-50%) rotate(-90deg) scaleX(.9)">Recent</div></div>
<div class="abs" style="left:921.5px;top:320px;width:0;height:0"><div style="position:absolute;white-space:nowrap;font-size:8.9px;line-height:10px;color:#b9bec8;transform:translate(-50%,-50%) rotate(-90deg) scaleX(.9)">Other Drawing</div></div>
<div class="abs" style="left:1190.500px;top:592px;width:0;height:0"><div style="position:absolute;white-space:nowrap;font-size:7.500px;line-height:10px;color:#c5cad3;transform:translate(-50%,-50%) rotate(-90deg) scaleX(.9)">BLOCKS</div></div>
<svg class="abs" style="left:1184px;top:119px" width="14" height="506" viewBox="1184 119 14 506"><g stroke="#e0e3e8" stroke-width="1.300" fill="none"><path d="M1187.500 121.500l5 5M1192.500 121.500l-5 5"/><path d="M1187.500 133.500v6M1192.500 133.500v6M1188 136.500h4" stroke-width="1.100"/><circle cx="1190" cy="149" r="2.200"/><path d="M1190 145v8M1186 149h8M1187.200 146.200l5.600 5.600M1192.800 146.200l-5.600 5.600" stroke-width=".9"/></g><rect x="1186" y="614" width="7" height="6" fill="#9fb8d0"/><rect x="1184.500" y="617" width="4" height="4" fill="#e8eaed"/></svg>
<div class="abs" style="left:937px;top:129px;width:192px;height:13.500px;background:#4a5469;border:1px solid #525d73"></div>
<div class="t" style="left:940px;top:131px;font-size:8.500px;font-style:italic;color:#d0d5de">Filter...</div>
<svg class="abs" style="left:1119px;top:132px" width="60" height="8" viewBox="1119 132 60 8"><path d="M1121 134h6l-3 3.500z" fill="#dfe2e8"/><g fill="#dfe2e8"><rect x="1137" y="137" width="1.300" height="1.300"/><rect x="1139.700" y="137" width="1.300" height="1.300"/><rect x="1142.400" y="137" width="1.300" height="1.300"/></g><rect x="1150" y="132" width="11" height="7.500" fill="#86b6dc"/><rect x="1150" y="136" width="11" height="3.500" fill="#4f83b8"/><path d="M1165 134h6l-3 3.500z" fill="#dfe2e8"/></svg>
<div class="t" style="left:936px;top:146px;font-size:8.500px;font-weight:bold;color:#eef0f3">Current Drawing Blocks</div>
<div class="abs" style="left:1162.500px;top:159px;width:11px;height:353px;background:#f1f1f1"></div>
<div class="abs" style="left:1162.500px;top:200px;width:11px;height:175px;background:#cdcdcd"></div>
<svg class="abs" style="left:1162px;top:159px" width="12" height="353" viewBox="0 0 12 353"><path d="M3 8l3-3 3 3M3 343l3 3 3-3" stroke="#9a9a9a" stroke-width="1" fill="none"/></svg>
<svg class="abs" style="left:936px;top:159px" width="226" height="353" viewBox="936 159 226 353"><circle cx="963.3" cy="181.7" r="19.500" stroke="#c4c038" stroke-width="1.100" fill="none"/><text x="963.3" y="191.5" font-size="27.5" text-anchor="middle" fill="#ff19c4" stroke="#ff19c4" stroke-width="1.3" font-family="Liberation Sans, sans-serif">1</text><circle cx="1016.7" cy="181.7" r="19.500" stroke="#20242c" stroke-width="1.100" fill="none"/><text x="1016.7" y="191.5" font-size="27.5" text-anchor="middle" fill="#0c0e12" stroke="#0c0e12" stroke-width="1.3" font-family="Liberation Sans, sans-serif">1</text><circle cx="1070" cy="181.7" r="19.500" stroke="#c4c038" stroke-width="1.100" fill="none"/><text x="1070" y="191.5" font-size="27.5" text-anchor="middle" fill="#ff19c4" stroke="#ff19c4" stroke-width="1.3" font-family="Liberation Sans, sans-serif" textLength="27" lengthAdjust="spacingAndGlyphs">10</text><circle cx="1123.3" cy="181.7" r="19.500" stroke="#20242c" stroke-width="1.100" fill="none"/><text x="1123.3" y="191.5" font-size="27.5" text-anchor="middle" fill="#0c0e12" stroke="#0c0e12" stroke-width="1.3" font-family="Liberation Sans, sans-serif" textLength="27" lengthAdjust="spacingAndGlyphs">10</text><circle cx="1070" cy="243.3" r="19.500" stroke="#c4c038" stroke-width="1.100" fill="none"/><text x="1070" y="253.10000000000002" font-size="27.5" text-anchor="middle" fill="#ff19c4" stroke="#ff19c4" stroke-width="1.3" font-family="Liberation Sans, sans-serif">2</text><circle cx="1123.3" cy="243.3" r="19.500" stroke="#20242c" stroke-width="1.100" fill="none"/><text x="1123.3" y="253.10000000000002" font-size="27.5" text-anchor="middle" fill="#0c0e12" stroke="#0c0e12" stroke-width="1.3" font-family="Liberation Sans, sans-serif">2</text><circle cx="963.3" cy="427.3" r="19.500" stroke="#c4c038" stroke-width="1.100" fill="none"/><text x="963.3" y="437.1" font-size="27.5" text-anchor="middle" fill="#ff19c4" stroke="#ff19c4" stroke-width="1.3" font-family="Liberation Sans, sans-serif">3</text><circle cx="1016.7" cy="427.3" r="19.500" stroke="#20242c" stroke-width="1.100" fill="none"/><text x="1016.7" y="437.1" font-size="27.5" text-anchor="middle" fill="#0c0e12" stroke="#0c0e12" stroke-width="1.3" font-family="Liberation Sans, sans-serif">3</text><circle cx="1070" cy="427.3" r="19.500" stroke="#c4c038" stroke-width="1.100" fill="none"/><text x="1070" y="437.1" font-size="27.5" text-anchor="middle" fill="#ff19c4" stroke="#ff19c4" stroke-width="1.3" font-family="Liberation Sans, sans-serif">4</text><circle cx="1123.3" cy="427.3" r="19.500" stroke="#20242c" stroke-width="1.100" fill="none"/><text x="1123.3" y="437.1" font-size="27.5" text-anchor="middle" fill="#0c0e12" stroke="#0c0e12" stroke-width="1.3" font-family="Liberation Sans, sans-serif">4</text><circle cx="963.3" cy="489" r="19.500" stroke="#c4c038" stroke-width="1.100" fill="none"/><text x="963.3" y="498.8" font-size="27.5" text-anchor="middle" fill="#ff19c4" stroke="#ff19c4" stroke-width="1.3" font-family="Liberation Sans, sans-serif">5</text><circle cx="1016.7" cy="489" r="19.500" stroke="#e8e8e8" stroke-width="1.100" fill="none"/><text x="1016.7" y="498.8" font-size="27.5" text-anchor="middle" fill="#f4f4f4" stroke="#f4f4f4" stroke-width="1.3" font-family="Liberation Sans, sans-serif">5</text><circle cx="1070" cy="489" r="19.500" stroke="#c4c038" stroke-width="1.100" fill="none"/><text x="1070" y="498.8" font-size="27.5" text-anchor="middle" fill="#ff19c4" stroke="#ff19c4" stroke-width="1.3" font-family="Liberation Sans, sans-serif">6</text><circle cx="1123.3" cy="489" r="19.500" stroke="#e8e8e8" stroke-width="1.100" fill="none"/><text x="1123.3" y="498.8" font-size="27.5" text-anchor="middle" fill="#f4f4f4" stroke="#f4f4f4" stroke-width="1.3" font-family="Liberation Sans, sans-serif">6</text><path d="M1017.500 227v34" stroke="#e01a9a" stroke-width="1.600"/><path d="M1015 228h8M1015 259.500h8" stroke="#e0202a" stroke-width="2.200"/><path d="M1033 256l-3.500 5h3l-2 4.500 5.500-6h-3l2.500-3.500z" fill="#f0c23a"/><g transform="translate(963.3 305)"><rect x="-14" y="-9" width="28" height="20" fill="#2a3a5a"/><path d="M-14 -12h26" stroke="#d01a24" stroke-width="2"/><path d="M-14 -6h30M-14 1h30M-14 7h30" stroke="#1f9a80" stroke-width="1.200"/><path d="M-12 -12v24M-4 -12v24M5 -12v24M13 -12v24" stroke="#2b9fe0" stroke-width="1.200"/><rect x="-8" y="-5" width="6" height="6" fill="#a01ac0"/><rect x="1" y="-5" width="6" height="6" fill="#c01a90"/><rect x="-3" y="3" width="5" height="8" fill="#a01ac0"/><rect x="10" y="0" width="6" height="4" fill="#e0302a"/><path d="M-18 12.500h38" stroke="#2222d8" stroke-width="1.500"/></g><g transform="translate(1016.7 305)"><path d="M-12 5v-9l10-3 22 6v6z" fill="#5fbf2a"/><path d="M-12 -4l10-3 22 6" stroke="#d8c830" stroke-width="1.200" fill="none"/><rect x="6" y="-1" width="8" height="6" fill="#e8a02a"/><rect x="-2" y="0" width="6" height="5" fill="#3a9a5a"/><path d="M-8 -9l6 -1 1 4" stroke="#d01a24" stroke-width="1" fill="none"/><rect x="14" y="0" width="5" height="5" fill="#e0602a"/><path d="M-20 6h44" stroke="#2222d8" stroke-width="1.500"/><rect x="18" y="2" width="8" height="2" fill="#e01a9a"/></g><g transform="translate(1070 305)"><path d="M-6 5v-7l18-5 4 6v6z" fill="#4a8f2a"/><path d="M-6 -2l18-5 4 6" stroke="#e8b0b0" stroke-width="1.200" fill="none"/><rect x="-5" y="-1" width="8" height="6" fill="#e8902a"/><rect x="4" y="-1" width="9" height="6" fill="#9ad0f0"/><rect x="-12" y="1" width="6" height="4" fill="#e0302a"/><path d="M-20 6h40" stroke="#2222d8" stroke-width="1.500"/><path d="M-18 3h8" stroke="#e01a9a" stroke-width="1.500"/><path d="M12 -8l6 -2" stroke="#d01a24" stroke-width="1"/></g><g transform="translate(1123.3 305)"><path d="M-13 -12h26" stroke="#d01a24" stroke-width="1.500"/><path d="M-13 -8h26M-13 -3h26M-13 3h28M-13 9h28" stroke="#1f9a80" stroke-width="1.200"/><path d="M-11 -12v24M-5 -12v24M1 -12v24M7 -12v24M12 -12v24" stroke="#2b9fe0" stroke-width="1.200"/><rect x="-9" y="0" width="20" height="10" fill="#8a1fc4"/><path d="M-9 2h20M-9 6h20" stroke="#d03a8a" stroke-width="1"/><rect x="-15" y="0" width="3" height="11" fill="#e8a02a"/><rect x="-4" y="-8" width="5" height="5" fill="#c01a90"/><path d="M-18 12.500h38" stroke="#2222d8" stroke-width="1.500"/><path d="M-16 0h32" stroke="#e0302a" stroke-width="1"/></g><rect x="953.3" y="347" width="20.500" height="38.500" stroke="#eef0f3" stroke-width="1" fill="#2a3140"/><rect x="956.3" y="351" width="8" height="14" fill="#c0306a"/><rect x="964.3" y="350" width="6" height="8" fill="#e0502a"/><rect x="957.3" y="366" width="10" height="8" fill="#b03a8a"/><rect x="965.3" y="360" width="5" height="10" fill="#e01a9a"/><rect x="956.3" y="378" width="15" height="4.500" fill="#2fc86a"/><rect x="958.3" y="372" width="9" height="3" fill="#e0302a"/><rect x="997.7" y="358.500" width="39.500" height="15.500" stroke="#cfd3da" stroke-width="1" fill="#2a3140"/><rect x="1001.7" y="361" width="7" height="10" fill="#8a5ad0"/><rect x="1009.7" y="361" width="6" height="10" fill="#c06a3a"/><rect x="1016.7" y="362" width="5" height="9" fill="#e0a02a"/><rect x="1022.7" y="361" width="4" height="10" fill="#2fc86a"/><rect x="1027.7" y="360" width="2" height="12" fill="#2fc8a0"/><rect x="1004.7" y="363" width="3" height="5" fill="#e01a9a"/><g transform="translate(1070 367)"><path d="M-8 3v-4l14-6 6 5v5z" fill="#b0502a"/><rect x="-2" y="-3" width="6" height="5" fill="#e8d02a"/><rect x="5" y="-2" width="6" height="5" fill="#5fbf2a"/><rect x="-8" y="-2" width="5" height="4" fill="#e0302a"/><path d="M-6 -3l14 -6" stroke="#e8b0b0" stroke-width="1.200"/><rect x="10" y="-4" width="4" height="6" fill="#f0f0f0"/><path d="M-20 4h40" stroke="#2222d8" stroke-width="1.600"/><path d="M6 4h14" stroke="#f0f0f0" stroke-width="1.300"/></g><g transform="translate(1123.3 367)"><path d="M-8 3v-4l14-6 6 5v5z" fill="#b0502a"/><rect x="-2" y="-3" width="6" height="5" fill="#e8d02a"/><rect x="5" y="-2" width="6" height="5" fill="#5fbf2a"/><rect x="-8" y="-2" width="5" height="4" fill="#e0302a"/><path d="M-6 -3l14 -6" stroke="#e8b0b0" stroke-width="1.200"/><rect x="10" y="-4" width="4" height="6" fill="#f0f0f0"/><path d="M-20 4h40" stroke="#ff19a0" stroke-width="1.600"/></g></svg>
<div class="t c" style="left:963.3px;top:204px;font-size:8.500px;color:#eef0f3">1</div>
<div class="t c" style="left:1016.7px;top:204px;font-size:8.500px;color:#eef0f3">1 circle</div>
<div class="t c" style="left:1070px;top:204px;font-size:8.500px;color:#eef0f3">10</div>
<div class="t c" style="left:1123.3px;top:204px;font-size:8.500px;color:#eef0f3">10 circle</div>
<div class="t c" style="left:963.3px;top:265.7px;font-size:8.500px;color:#eef0f3">15160_P_...</div>
<div class="t c" style="left:1016.7px;top:265.7px;font-size:8.500px;color:#eef0f3">15160_P_...</div>
<div class="t c" style="left:1070px;top:265.7px;font-size:8.500px;color:#eef0f3">2</div>
<div class="t c" style="left:1123.3px;top:265.7px;font-size:8.500px;color:#eef0f3">2 circle</div>
<div class="t c" style="left:963.3px;top:326.7px;font-size:8.500px;color:#eef0f3">2d_ele_east</div>
<div class="t c" style="left:1016.7px;top:326.7px;font-size:8.500px;color:#eef0f3">2d_ele_north</div>
<div class="t c" style="left:1070px;top:326.7px;font-size:8.500px;color:#eef0f3">2d_ele_south</div>
<div class="t c" style="left:1123.3px;top:326.7px;font-size:8.500px;color:#eef0f3">2d_ele_west</div>
<div class="t c" style="left:963.3px;top:388.3px;font-size:8.500px;color:#eef0f3">2d_plan_GF</div>
<div class="t c" style="left:1016.7px;top:388.3px;font-size:8.500px;color:#eef0f3">2d_plan_m...</div>
<div class="t c" style="left:1070px;top:388.3px;font-size:8.500px;color:#eef0f3">2d_section...</div>
<div class="t c" style="left:1123.3px;top:388.3px;font-size:8.500px;color:#eef0f3">2d_section...</div>
<div class="t c" style="left:963.3px;top:449.3px;font-size:8.500px;color:#eef0f3">3</div>
<div class="t c" style="left:1016.7px;top:449.3px;font-size:8.500px;color:#eef0f3">3 circle</div>
<div class="t c" style="left:1070px;top:449.3px;font-size:8.500px;color:#eef0f3">4</div>
<div class="t c" style="left:1123.3px;top:449.3px;font-size:8.500px;color:#eef0f3">4 circle</div>
<div class="abs" style="left:936px;top:513px;width:238px;height:15.500px;background:#2a303d"></div>
<div class="t" style="left:940px;top:516px;font-size:8.600px;color:#f0f2f5">Insertion Options</div>
<svg class="abs" style="left:1161px;top:518px" width="8" height="6" viewBox="0 0 8 6"><path d="M1 1h6l-3 3.500z" fill="#e6e9ee"/></svg>
<div class="abs" style="left:936px;top:528.500px;width:238px;height:87px;background:#383f51;border:1px solid #4a5467;border-top:none"></div>
<div class="abs" style="left:941px;top:536.3px;width:8px;height:8px;background:#cdd4e2"></div>
<svg class="abs" style="left:941px;top:536.3px" width="8" height="8" viewBox="0 0 8 8"><path d="M1.500 4l2 2 3-4.500" stroke="#2c3b6a" stroke-width="1.400" fill="none"/></svg>
<div class="t" style="left:967.500px;top:535.3px;font-size:8.600px;color:#f0f2f5">Insertion Point</div>
<div class="abs" style="left:941px;top:553px;width:8px;height:8px;background:#8792a8"></div>
<div class="abs" style="left:941px;top:570px;width:8px;height:8px;background:#cdd4e2"></div>
<svg class="abs" style="left:941px;top:570px" width="8" height="8" viewBox="0 0 8 8"><path d="M1.500 4l2 2 3-4.500" stroke="#2c3b6a" stroke-width="1.400" fill="none"/></svg>
<div class="t" style="left:967.500px;top:569px;font-size:8.600px;color:#f0f2f5">Rotation</div>
<div class="abs" style="left:941px;top:586.7px;width:8px;height:8px;background:#cdd4e2"></div>
<svg class="abs" style="left:941px;top:586.7px" width="8" height="8" viewBox="0 0 8 8"><path d="M1.500 4l2 2 3-4.500" stroke="#2c3b6a" stroke-width="1.400" fill="none"/></svg>
<div class="t" style="left:967.500px;top:585.7px;font-size:8.600px;color:#f0f2f5">Repeat Placement</div>
<div class="abs" style="left:941px;top:603.2px;width:8px;height:8px;background:#8792a8"></div>
<div class="t" style="left:967.500px;top:602.2px;font-size:8.600px;color:#f0f2f5">Explode</div>
<svg class="abs" style="left:951px;top:534px" width="13" height="80" viewBox="951 534 13 80"><g stroke="#dfe3ea" stroke-width="1" fill="none"><path d="M953 538h8v4h-8zM955 542v2M959 542v2"/><circle cx="955" cy="544.500" r="1"/><circle cx="959.500" cy="544.500" r="1"/><path d="M952.500 552.500h9.500v9.500h-9.500zM952.500 557.500h4.500v4.500"/><path d="M960 570.500a4.200 4.200 0 1 1-3-1.200"/><path d="M956 568l2.500 1.300-2 1.700" fill="#dfe3ea"/><path d="M953 589h6v5h-6zM955 587h6v5M957 585.500h5.500v5"/><path d="M953 604h6v6h-6zM955.500 602h6v6l-2.500 2M953 604l2.500-2M959 604l2.500-2"/></g></svg>
<div class="abs" style="left:968.500px;top:551px;width:72.500px;height:11.500px;background:#4a5469"></div>
<div class="t" style="left:971px;top:552px;font-size:8.600px;color:#f0f2f5">Scale</div>
<svg class="abs" style="left:1032px;top:555px" width="7" height="5" viewBox="0 0 7 5"><path d="M.5.500h6l-3 3.500z" fill="#e6e9ee"/></svg>
<div class="t" style="left:1046.5px;top:552px;font-size:8.600px;color:#f0f2f5">X:</div>
<div class="abs" style="left:1057.3px;top:551px;width:27px;height:11.500px;background:#4a5469"></div>
<div class="t" style="left:1059.3px;top:552px;font-size:8.600px;color:#f0f2f5">1</div>
<div class="t" style="left:1087.8px;top:552px;font-size:8.600px;color:#f0f2f5">Y:</div>
<div class="abs" style="left:1098.5px;top:551px;width:27px;height:11.500px;background:#4a5469"></div>
<div class="t" style="left:1100.5px;top:552px;font-size:8.600px;color:#f0f2f5">1</div>
<div class="t" style="left:1129px;top:552px;font-size:8.600px;color:#f0f2f5">Z:</div>
<div class="abs" style="left:1139.8px;top:551px;width:27px;height:11.500px;background:#4a5469"></div>
<div class="t" style="left:1141.8px;top:552px;font-size:8.600px;color:#f0f2f5">1</div>
<div class="abs" style="left:293.500px;top:683.500px;width:730.500px;height:15.500px;background:rgba(213,214,218,.84)"></div>
<svg class="abs" style="left:255px;top:683px" width="60" height="16" viewBox="255 683 60 16"><path d="M258.500 684.500v13M261 684.500v13" stroke="#9a9ea8" stroke-width="1.100"/><path d="M266 688l5.500 5.500M271.500 688l-5.500 5.500" stroke="#dfe2e8" stroke-width="1.300"/><path d="M280.500 696l5-5" stroke="#dfe2e8" stroke-width="2"/><path d="M284.500 687.500a3 3 0 1 0 4 4l-2 .300-1.500-1.500z" fill="#dfe2e8"/><rect x="296" y="687" width="9" height="7.500" fill="#f2f2f2" stroke="#555" stroke-width="1"/><path d="M297.500 689.500l2 1.500" stroke="#555" stroke-width=".8"/><path d="M307 690h4l-2 2.500z" fill="#444"/></svg>
<div class="t" style="left:318px;top:686px;font-size:8px;font-style:italic;color:#6a6d75;font-family:'Liberation Mono',monospace;letter-spacing:.2px">Type a command</div>
<svg class="abs" style="left:1014px;top:686px" width="8" height="8" viewBox="0 0 8 8"><path d="M1.500 5l2.500-2.500 2.500 2.500" stroke="#444" stroke-width="1.200" fill="none"/></svg>

<div id="status">
<svg class="abs" style="left:0;top:0" width="200" height="22" viewBox="0 698 200 22"><path d="M5 701h36l5 12.500h-36z" fill="#3b4354"/><path d="M46 701h112l5 12.500h-112z" fill="#2c3341"/><path d="M163 701h16l5 12.500h-16z" fill="#2c3341"/><path d="M174 704v7M170.500 707.500h7" stroke="#cfd3da" stroke-width="1.100"/></svg>
<div class="t" style="left:15.500px;top:4px;font-size:8.500px;font-weight:bold;color:#fff">Model</div>
<div class="t" style="left:54px;top:4px;font-size:8.500px;color:#d0d4db">Plans Sections and Elevations</div>
<div class="abs" style="left:905px;top:3px;width:32px;height:16px;background:#2f3645"></div>
<div class="t" style="left:908px;top:6.500px;font-size:8.800px;color:#f0f2f5">MODEL</div>
<svg class="abs" style="left:937px;top:0" width="343" height="22" viewBox="937 698 343 22">
<g fill="#4d84c6"><rect x="955" y="700" width="15.500" height="17"/><rect x="983" y="700" width="15" height="17"/><rect x="1052" y="700" width="15" height="17"/><rect x="1068.500" y="700" width="14.500" height="17"/><rect x="1096" y="700" width="15" height="17"/></g>
<g stroke="#e4e7ec" stroke-width="1" fill="none">
<path d="M942 704h9M942 707.500h9M942 711h9M944 702v11M947.500 702v11M951 702v11" stroke-width=".9"/>
<g fill="#e4e7ec" stroke="none"><rect x="958" y="703" width="1.500" height="1.500"/><rect x="962" y="703" width="1.500" height="1.500"/><rect x="966" y="703" width="1.500" height="1.500"/><rect x="958" y="707" width="1.500" height="1.500"/><rect x="962" y="707" width="1.500" height="1.500"/><rect x="966" y="707" width="1.500" height="1.500"/><rect x="958" y="711" width="1.500" height="1.500"/><rect x="962" y="711" width="1.500" height="1.500"/><rect x="966" y="711" width="1.500" height="1.500"/></g>
<path d="M986 702v11h10M986 709h4v4" stroke-width="1.300"/>
<circle cx="1006" cy="708.500" r="4.500"/><path d="M1006 708.500h6M1006 708.500l4-4"/>
<path d="M1030 702l3 12M1034 702l-5 12M1028 708h8"/>
<path d="M1054 713h11M1054 713l9-9" stroke-width="1.300"/>
<rect x="1071.500" y="704" width="9" height="9"/><rect x="1070" y="702.500" width="3" height="3" fill="#e4e7ec"/>
<path d="M1099 714l4.500-11 4.500 11M1103.500 703v6" stroke-width="1.400"/><circle cx="1107" cy="704" r="1.500"/>
<path d="M1114 714l4.500-11 4.500 11M1118.500 703v6M1120 703l3-2" stroke-width="1.400"/>
<path d="M1130 714l4.500-11 4.500 11M1134.500 703v6" stroke-width="1.400"/>
<circle cx="1175" cy="708.500" r="3" stroke-width="2.200"/><path d="M1175 702.500v12M1169 708.500h12M1170.800 704.300l8.400 8.400M1179.200 704.300l-8.400 8.400" stroke-width="1.400"/>
<path d="M1202 703v11M1196.500 708.500h11" stroke-width="1.500"/>
<circle cx="1216" cy="705" r="2.200"/><rect x="1220" y="703" width="4" height="4"/><path d="M1214 713l2.500-4 2.500 4z"/><circle cx="1222.500" cy="711.500" r="2"/>
<rect x="1249" y="704" width="11" height="8.500"/><path d="M1251 710.500l3-3 2 2 1.500-1.500 2 2.500" stroke-width=".9"/>
<path d="M1265.500 704h10.500M1265.500 708.500h10.500M1265.500 713h10.500" stroke-width="1.700"/>
</g>
<g fill="#cfd3da"><path d="M973.500 707h4l-2 2.500z"/><path d="M1017.500 707h4l-2 2.500z"/><path d="M1043.500 707h4l-2 2.500z"/><path d="M1086.500 707h4l-2 2.500z"/><path d="M1158.500 707h4l-2 2.500z"/><path d="M1185.700 707h4l-2 2.500z"/></g>
<rect x="1231" y="702.500" width="7" height="3.500" fill="#f0c030"/><rect x="1230" y="706" width="12" height="4" fill="#4f9ae0"/><rect x="1232" y="710.500" width="8" height="3" fill="#5fbf4a"/>
</svg>
<div class="t" style="left:1145.500px;top:6.500px;font-size:8.500px;color:#f0f2f5">1:1</div>

</div>
<div class="abs" style="left:605px;top:57px;width:223.500px;height:131.500px;background:#f1f2f5;box-shadow:0 0 2px rgba(0,0,0,.5)"></div>
<div class="abs" style="left:573.800px;top:14.900px;width:63px;height:63px;border-radius:50%;background:rgba(219,218,34,.95)"></div>
<svg class="abs" style="left:596px;top:34px" width="44" height="32" viewBox="596 34 44 32"><rect x="599" y="35.500" width="4" height="8" fill="#f2f0a0" opacity=".85"/><rect x="603.500" y="37" width="3" height="8" fill="#f4f2b0" opacity=".8"/><path d="M604.500 45.300v10.800l2.500-2.400 1.900 4 1.600-.7-1.900-3.900h3.400z" fill="#fff" stroke="#222" stroke-width=".8"/><rect x="598" y="63" width="6" height="3" fill="#cfca2a"/></svg>
<div class="t" style="left:611px;top:35px;font-size:9px;color:#d6cf5a">Purge</div>
<div class="t" style="left:610px;top:62px;font-size:8.800px;color:#6f6c28">Purge</div>
<div class="t" style="left:610px;top:76.500px;font-size:8.300px;color:#3c3c3c;transform:scaleX(.955)">Removes unused named items, such as block definitions and</div>
<div class="t" style="left:610px;top:86.500px;font-size:8.300px;color:#3c3c3c;transform:scaleX(.955)">layers, from the drawing</div>
<div class="t" style="left:610px;top:108.500px;font-size:8.300px;color:#3c3c3c;transform:scaleX(.955)">Unused named objects can be removed from the current</div>
<div class="t" style="left:610px;top:118.500px;font-size:8.300px;color:#3c3c3c;transform:scaleX(.955)">drawing. These include include block definitions, dimension</div>
<div class="t" style="left:610px;top:128.500px;font-size:8.300px;color:#3c3c3c;transform:scaleX(.955)">styles, groups, layers, linetypes, and text styles. Zero-length</div>
<div class="t" style="left:610px;top:138.500px;font-size:8.300px;color:#3c3c3c;transform:scaleX(.955)">geometry and empty text objects can also be removed.</div>
<div class="abs" style="left:609px;top:154px;width:215px;height:1px;background:#d9dadd"></div>
<svg class="abs" style="left:609px;top:158px" width="12" height="12" viewBox="0 0 12 12"><rect x="1" y="1" width="10" height="10" fill="#e8e6a0"/><rect x="1" y="1" width="10" height="1.500" fill="#2a3a9a"/><rect x="1" y="7.500" width="10" height="3.500" fill="#2a2a2a"/></svg>
<div class="t" style="left:623px;top:159px;font-size:8.500px;color:#333">PURGE</div>
<div class="t" style="left:610px;top:174px;font-size:8.500px;font-weight:bold;color:#333">Press F1 for more help</div>

</body>
</html>
